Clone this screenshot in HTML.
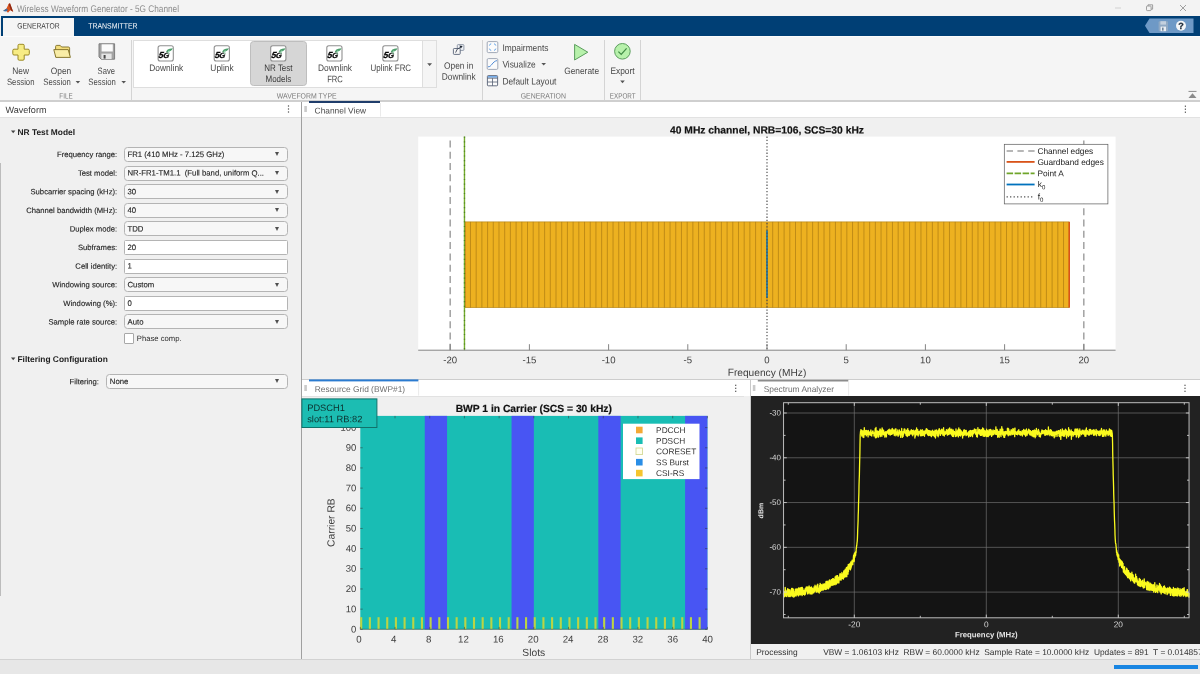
<!DOCTYPE html>
<html lang="en"><head><meta charset="utf-8"><title>Wireless Waveform Generator - 5G Channel</title>
<style>
*{box-sizing:border-box;margin:0;padding:0}
html,body{width:1200px;height:674px;overflow:hidden;background:#f0f0f0}
body{position:relative;will-change:transform;font-family:"Liberation Sans",sans-serif;color:#444;font-size:8.3px}
.a{position:absolute}
.t{position:absolute;white-space:nowrap;line-height:1;transform:translate(var(--fx,0px),var(--fy,0px)) rotate(0.03deg)}
.c{transform:translate(var(--fx,0px),var(--fy,0px)) translateX(-50%) rotate(0.03deg)}
.r{transform:translate(var(--fx,0px),var(--fy,0px)) translateX(-100%) rotate(0.03deg)}
svg{position:absolute;left:0;top:0;overflow:visible}
svg text{font-family:"Liberation Sans",sans-serif}
.fld{position:absolute;left:124px;width:163.6px;height:15.2px;border:1px solid #b4b4b4;background:#fff;border-radius:1.5px}
.dd{background:#f7f7f7;border-radius:3.5px;border-color:#b4b4b4}
.ft{-webkit-text-stroke:.12px #1e1e1e;font-size:7.76px;color:#1e1e1e}
.fld i{position:absolute;right:7.5px;top:4.5px;width:0;height:0;border-left:2.7px solid transparent;border-right:2.7px solid transparent;border-top:4.6px solid #505050}
.lbl{-webkit-text-stroke:.12px #1e1e1e;position:absolute;white-space:nowrap;line-height:1;font-size:7.7px;color:#1e1e1e;transform:translate(var(--fx,0px),var(--fy,0px)) translateX(-100%) rotate(0.03deg);left:117.2px}
.rt{position:absolute;white-space:nowrap;line-height:1.235;font-size:9.3px;color:#484848;text-align:center;transform:translate(var(--fx,0px),var(--fy,0px)) translateX(-50%) scaleX(.9) rotate(0.03deg)}
.lt{position:absolute;white-space:nowrap;line-height:1;font-size:9.3px;color:#484848;transform-origin:0 50%;transform:translate(var(--fx,0px),var(--fy,0px)) scaleX(.9) rotate(0.03deg)}
.sec{position:absolute;white-space:nowrap;line-height:1;font-size:7.7px;color:#7a7a7a;transform:translate(var(--fx,0px),var(--fy,0px)) translateX(-50%) scaleX(.9) rotate(0.03deg);top:92.6px}
.vsep{position:absolute;width:1.2px;background:#d4d4d4;top:40.4px;height:59.4px}
</style></head>
<body>
<div class="a" style="left:0;top:0;width:1200px;height:16px;background:#f3f3f3"></div>
<svg width="1200" height="16" viewBox="0 -0.8 1200 16"><path d="M3 10.2 L6.5 7.6 L8.6 3.2 L10 2.4 L13.2 11 L10.2 9.4 L8 12 L6 10 Z" fill="#d9531e"/><path d="M3 10.2 L6.5 7.6 L8 9.3 L6 10.6 Z" fill="#3a6ea5"/><path d="M8.6 3.2 L10 2.4 L13.2 11 L11 9.8 Z" fill="#8e2a16"/></svg>
<div class="t" style="top:3px;--fy:0.9px;left:17px;font-size:9.6px;color:#8c8c8c;transform-origin:0 50%;transform:translate(var(--fx,0px),var(--fy,0px)) scaleX(.86) rotate(0.03deg)">Wireless Waveform Generator - 5G Channel</div>
<svg width="1200" height="16" viewBox="0 0 1200 16"><path d="M1115 8 H1121" stroke="#c8c8c8" stroke-width="0.8" fill="none"/><rect x="1146.5" y="6" width="4.6" height="4.6" rx="0.8" fill="none" stroke="#8a8a8a" stroke-width="0.8"/><path d="M1148 6 V4.8 H1152.6 V9.2 H1151.2" fill="none" stroke="#8a8a8a" stroke-width="0.8"/><path d="M1180 5 L1186 11 M1186 5 L1180 11" stroke="#8a8a8a" stroke-width="0.8" fill="none"/></svg>
<div class="a" style="left:1px;top:16px;width:1199px;height:19.6px;background:#003f75"></div>
<div class="a" style="left:0;top:35.6px;width:1200px;height:65.4px;background:#f5f5f5"></div>
<div class="a" style="left:0;top:35.6px;width:1200px;height:0.9px;background:#fcfcfc"></div>
<div class="a" style="left:3.3px;top:18.3px;width:70.6px;height:18px;background:#f5f5f5"></div>
<div class="t" style="top:22px;--fy:0.5px;left:38px;--fx:0.4px;font-size:7.8px;color:#3c3c3c;transform:translate(var(--fx,0px),var(--fy,0px)) translateX(-50%) scaleX(.87) rotate(0.03deg)">GENERATOR</div>
<div class="t" style="top:22px;--fy:0.5px;left:112px;--fx:0.9px;font-size:7.8px;color:#fff;transform:translate(var(--fx,0px),var(--fy,0px)) translateX(-50%) scaleX(.89) rotate(0.03deg)">TRANSMITTER</div>
<svg width="1200" height="40" viewBox="0 0 1200 40"><path d="M1145 25.8 L1149.5 18.6 H1193.5 V33 H1149.5 Z" fill="#6e99c6"/><rect x="1158.6" y="21.2" width="9.4" height="10" rx="1" fill="#8fa9c4"/><rect x="1160.4" y="21.2" width="5.6" height="3.4" fill="#c3d0de"/><rect x="1160.6" y="26.6" width="5.4" height="4.6" fill="#e8edf2"/><rect x="1162" y="27.6" width="1.6" height="3" fill="#6f859c"/><circle cx="1181" cy="25.8" r="5" fill="#f4f6f8"/><text transform="rotate(0.03 1181 29)" x="1181" y="29" font-size="9" font-weight="bold" text-anchor="middle" fill="#1d2b3a" stroke="#1d2b3a" stroke-width="0.3">?</text></svg>
<div class="a" style="left:0;top:100.4px;width:1200px;height:1.2px;background:#cfcfcf"></div>
<svg width="1200" height="110" viewBox="0 0 1200 110"><path d="M1188.5 91.4 H1196.5" stroke="#8a8a8a" stroke-width="1"/><path d="M1188.5 98 L1192.5 93.2 L1196.5 98 Z" fill="#8a8a8a"/></svg>
<div class="vsep" style="left:131px"></div>
<div class="vsep" style="left:481.8px"></div>
<div class="vsep" style="left:604.1px"></div>
<div class="vsep" style="left:640.2px"></div>
<div class="a" style="left:133.2px;top:40.4px;width:303.8px;height:47.3px;background:#fff;border:1px solid #dedede"></div>
<div class="a" style="left:422.4px;top:40.4px;width:14.6px;height:47.3px;background:#f5f5f5;border:1px solid #dedede"></div>
<div class="a" style="left:250.4px;top:41.4px;width:56.4px;height:44.6px;background:#d6d6d6;border:1px solid #bebebe;border-radius:3.5px"></div>
<svg width="1200" height="101" viewBox="0 0 1200 101"><path d="M19.2 44.3 h3.8 q1.2 0 1.2 1.2 v3.7 h3.9 q1.2 0 1.2 1.2 v3.4 q0 1.2 -1.2 1.2 h-3.9 v4 q0 1.2 -1.2 1.2 h-3.8 q-1.2 0 -1.2 -1.2 v-4 h-4 q-1.2 0 -1.2 -1.2 v-3.4 q0 -1.2 1.2 -1.2 h4 v-3.7 q0 -1.2 1.2 -1.2 z" fill="#f7ec84" stroke="#9c8a24" stroke-width="1"/><path d="M55.6 56.6 V46.6 q0 -1.2 1 -1.2 h3.6 l1.4 1.6 h6.8 q1.2 0 1.2 1.2 V56.6 Z" fill="#f3dd7c" stroke="#7d6c22" stroke-width="0.9" stroke-linejoin="round"/><path d="M53.8 49.6 h14.4 l2.2 7.8 h-14.6 Z" fill="#f9eda6" stroke="#7d6c22" stroke-width="0.9" stroke-linejoin="round"/><path d="M99 43.8 h15.6 v15.4 h-13.4 l-2.2 -2.2 Z" fill="#a3a3a3" stroke="#7e7e7e" stroke-width="1" stroke-linejoin="round"/><rect x="101.6" y="44.3" width="11.2" height="7.2" fill="#fbfbfb"/><rect x="101.4" y="53.6" width="10.2" height="5.4" fill="#e6e6e6"/><rect x="103.6" y="55" width="2" height="3.6" fill="#4a4a4a"/><g transform="translate(157.7,45.4)"><rect x="0.4" y="0.4" width="15.2" height="15.2" rx="2" fill="#fff" stroke="#909090" stroke-width="1.1"/><text transform="skewX(-9)" x="2.7" y="12.8" font-size="8.8" font-weight="bold" font-style="italic" fill="#0a0a0a" stroke="#0a0a0a" stroke-width="0.3" letter-spacing="-0.3">5<tspan font-size="7.6">G</tspan></text><path d="M8.4 6 Q9.8 3.8 12 3.4 L15.2 2.8 Q14.2 5 12.8 5.5 Q10.6 5.9 9.2 7.2 Z" fill="#4d9f6b"/><path d="M11.6 5.2 Q11 7 10.4 8.6" stroke="#9fd9b4" stroke-width="1.2" fill="none"/></g><g transform="translate(213.8,45.4)"><rect x="0.4" y="0.4" width="15.2" height="15.2" rx="2" fill="#fff" stroke="#909090" stroke-width="1.1"/><text transform="skewX(-9)" x="2.7" y="12.8" font-size="8.8" font-weight="bold" font-style="italic" fill="#0a0a0a" stroke="#0a0a0a" stroke-width="0.3" letter-spacing="-0.3">5<tspan font-size="7.6">G</tspan></text><path d="M8.4 6 Q9.8 3.8 12 3.4 L15.2 2.8 Q14.2 5 12.8 5.5 Q10.6 5.9 9.2 7.2 Z" fill="#4d9f6b"/><path d="M11.6 5.2 Q11 7 10.4 8.6" stroke="#9fd9b4" stroke-width="1.2" fill="none"/></g><g transform="translate(270.3,45.4)"><rect x="0.4" y="0.4" width="15.2" height="15.2" rx="2" fill="#fff" stroke="#909090" stroke-width="1.1"/><text transform="skewX(-9)" x="2.7" y="12.8" font-size="8.8" font-weight="bold" font-style="italic" fill="#0a0a0a" stroke="#0a0a0a" stroke-width="0.3" letter-spacing="-0.3">5<tspan font-size="7.6">G</tspan></text><path d="M8.4 6 Q9.8 3.8 12 3.4 L15.2 2.8 Q14.2 5 12.8 5.5 Q10.6 5.9 9.2 7.2 Z" fill="#4d9f6b"/><path d="M11.6 5.2 Q11 7 10.4 8.6" stroke="#9fd9b4" stroke-width="1.2" fill="none"/></g><g transform="translate(326.4,45.4)"><rect x="0.4" y="0.4" width="15.2" height="15.2" rx="2" fill="#fff" stroke="#909090" stroke-width="1.1"/><text transform="skewX(-9)" x="2.7" y="12.8" font-size="8.8" font-weight="bold" font-style="italic" fill="#0a0a0a" stroke="#0a0a0a" stroke-width="0.3" letter-spacing="-0.3">5<tspan font-size="7.6">G</tspan></text><path d="M8.4 6 Q9.8 3.8 12 3.4 L15.2 2.8 Q14.2 5 12.8 5.5 Q10.6 5.9 9.2 7.2 Z" fill="#4d9f6b"/><path d="M11.6 5.2 Q11 7 10.4 8.6" stroke="#9fd9b4" stroke-width="1.2" fill="none"/></g><g transform="translate(382.4,45.4)"><rect x="0.4" y="0.4" width="15.2" height="15.2" rx="2" fill="#fff" stroke="#909090" stroke-width="1.1"/><text transform="skewX(-9)" x="2.7" y="12.8" font-size="8.8" font-weight="bold" font-style="italic" fill="#0a0a0a" stroke="#0a0a0a" stroke-width="0.3" letter-spacing="-0.3">5<tspan font-size="7.6">G</tspan></text><path d="M8.4 6 Q9.8 3.8 12 3.4 L15.2 2.8 Q14.2 5 12.8 5.5 Q10.6 5.9 9.2 7.2 Z" fill="#4d9f6b"/><path d="M11.6 5.2 Q11 7 10.4 8.6" stroke="#9fd9b4" stroke-width="1.2" fill="none"/></g><path d="M427.2 63.2 h4.8 l-2.4 2.8 Z" fill="#555"/><path d="M75.6 81 h4.6 l-2.3 2.6 Z" fill="#555"/><path d="M121.4 81 h4.6 l-2.3 2.6 Z" fill="#555"/><rect x="457.3" y="44.6" width="6.6" height="5.8" rx="0.8" fill="#eef1f6" stroke="#7c8798" stroke-width="0.8"/><rect x="453.4" y="48.5" width="6.8" height="5.9" rx="0.8" fill="#f5f5f5" stroke="#586378" stroke-width="0.9"/><path d="M455.6 52.6 Q456.2 48.6 460.6 47.2" fill="none" stroke="#3d4656" stroke-width="0.9"/><path d="M459.4 45.6 L462.6 46 L460.8 48.8 Z" fill="#1f2733"/><rect x="487.2" y="41.6" width="10.6" height="11" rx="1.2" fill="#fbfbfb" stroke="#8a94a6" stroke-width="0.8"/><path d="M489.4 45.6 q0.2 -1.6 1.8 -1.8 M494 43.8 q1.6 0.2 1.8 1.8 M495.8 48.6 q-0.2 1.6 -1.8 1.8 M491.2 50.4 q-1.6 -0.2 -1.8 -1.8" fill="none" stroke="#5b9ee6" stroke-width="0.9"/><rect x="487.2" y="58.6" width="10.6" height="10.8" rx="1.2" fill="#fbfbfb" stroke="#8a94a6" stroke-width="0.8"/><path d="M488 66.8 C491.6 67.2 492.2 61.4 497 60.6" fill="none" stroke="#3f7fd0" stroke-width="0.9"/><rect x="487.4" y="75.6" width="10.2" height="10.2" rx="0.8" fill="#fbfbfb" stroke="#566074" stroke-width="0.9"/><rect x="487.9" y="76.1" width="9.2" height="1.5" fill="#6aa7ea"/><path d="M487.4 78.2 h10.2 M487.4 82 h10.2 M492.5 78.2 v7.6" fill="none" stroke="#566074" stroke-width="0.8"/><path d="M541.4 63 h4.6 l-2.3 2.6 Z" fill="#555"/><path d="M574.6 44.4 L587.8 52.2 L574.6 60 Z" fill="#b7f1ab" stroke="#5a9d5c" stroke-width="1" stroke-linejoin="round"/><circle cx="622.4" cy="51.3" r="7.8" fill="#b7f1ab" stroke="#5a9d5c" stroke-width="1"/><path d="M618.4 51.6 L621.2 54.4 L626.6 48.4" fill="none" stroke="#3f8a44" stroke-width="1.2"/><path d="M620.2 80.6 h4.6 l-2.3 2.6 Z" fill="#555"/></svg>
<div class="rt" style="top:66px;left:20px;--fx:0.6px;">New</div>
<div class="rt" style="top:77px;--fy:0.05px;left:20px;--fx:0.7px;transform:translate(var(--fx,0px),var(--fy,0px)) translateX(-50%) scaleX(0.83) rotate(0.03deg);">Session</div>
<div class="rt" style="top:66px;left:61px;">Open</div>
<div class="rt" style="top:77px;--fy:0.05px;left:57px;transform:translate(var(--fx,0px),var(--fy,0px)) translateX(-50%) scaleX(0.83) rotate(0.03deg);">Session</div>
<div class="rt" style="top:66px;left:106px;--fx:0.3px;transform:translate(var(--fx,0px),var(--fy,0px)) translateX(-50%) scaleX(0.82) rotate(0.03deg);">Save</div>
<div class="rt" style="top:77px;--fy:0.05px;left:102px;--fx:0.1px;transform:translate(var(--fx,0px),var(--fy,0px)) translateX(-50%) scaleX(0.83) rotate(0.03deg);">Session</div>
<div class="rt" style="top:63px;left:166px;--fx:0.3px;">Downlink</div>
<div class="rt" style="top:63px;left:222px;">Uplink</div>
<div class="rt" style="top:63px;left:278px;--fx:0.4px;color:#3a3a3a;transform:translate(var(--fx,0px),var(--fy,0px)) translateX(-50%) scaleX(0.86) rotate(0.03deg);">NR Test<br>Models</div>
<div class="rt" style="top:63px;left:335px;">Downlink</div>
<div class="rt" style="top:74px;--fy:0.25px;left:335px;transform:translate(var(--fx,0px),var(--fy,0px)) translateX(-50%) scaleX(0.82) rotate(0.03deg);">FRC</div>
<div class="rt" style="top:63px;left:390px;--fx:0.8px;transform:translate(var(--fx,0px),var(--fy,0px)) translateX(-50%) scaleX(0.855) rotate(0.03deg);">Uplink FRC</div>
<div class="rt" style="top:60px;--fy:0.8px;left:458px;--fx:0.7px;">Open in<br>Downlink</div>
<div class="rt" style="top:65px;--fy:0.9px;left:581px;--fx:0.6px;">Generate</div>
<div class="rt" style="top:65px;--fy:0.9px;left:622px;--fx:0.5px;">Export</div>
<div class="lt" style="top:43px;--fy:0.9px;left:502px;--fx:0.4px;">Impairments</div>
<div class="lt" style="top:60px;--fy:0.4px;left:502px;--fx:0.4px;">Visualize</div>
<div class="lt" style="top:77px;--fy:0.4px;left:502px;--fx:0.4px;">Default Layout</div>
<div class="sec" style="top:92px;--fy:0.6px;left:66px; transform:translate(var(--fx,0px),var(--fy,0px)) translateX(-50%) scaleX(.82) rotate(0.03deg);">FILE</div>
<div class="sec" style="top:92px;--fy:0.6px;left:306px;--fx:0.7px;">WAVEFORM TYPE</div>
<div class="sec" style="top:92px;--fy:0.6px;left:543px;--fx:0.3px;">GENERATION</div>
<div class="sec" style="top:92px;--fy:0.6px;left:622px;--fx:0.7px; transform:translate(var(--fx,0px),var(--fy,0px)) translateX(-50%) scaleX(.82) rotate(0.03deg);">EXPORT</div>
<div class="a" style="left:0;top:101.6px;width:1200px;height:15.2px;background:#fff"></div>
<div class="a" style="left:0;top:116.6px;width:1200px;height:0.8px;background:#e2e2e2"></div>
<div class="t" style="top:105px;--fy:0.9px;left:5px;--fx:0.4px;font-size:9.1px;color:#3a3a3a">Waveform</div>
<div class="a" style="left:301px;top:101.6px;width:1px;height:557.6px;background:#a0a0a0"></div>

<div class="a" style="left:0;top:163px;width:1px;height:433px;background:#bcbcbc"></div>
<div class="t" style="top:127px;--fy:0.9px;left:17px;--fx:0.5px;font-size:8.4px;font-weight:bold;color:#1c1c1c">NR Test Model</div>
<div class="t" style="top:354px;--fy:0.9px;left:17px;--fx:0.5px;font-size:8.4px;font-weight:bold;color:#1c1c1c">Filtering Configuration</div>
<svg width="310" height="674" viewBox="0 0 310 674"><path d="M11 130.6 h4.4 l-2.2 2.6 Z" fill="#444"/><path d="M11 357.6 h4.4 l-2.2 2.6 Z" fill="#444"/><rect x="287.9" y="105.4" width="1.2" height="1.2" fill="#4a4a4a"/><rect x="287.9" y="108.4" width="1.2" height="1.2" fill="#4a4a4a"/><rect x="287.9" y="111.4" width="1.2" height="1.2" fill="#4a4a4a"/><path d="M7 663.4 v7.2" stroke="#8a8a8a" stroke-width="1.2"/><path d="M12.8 663.4 v7.2 l-4.6 -3.6 Z" fill="#8a8a8a"/></svg>
<div class="lbl" style="top:151px;--fy:0.1px;left:117px;--fx:0.2px;">Frequency range:</div>
<div class="fld dd" style="top:146.90px"><i></i></div>
<div class="t ft" style="top:151px;left:127px;--fx:0.5px;">FR1 (410 MHz - 7.125 GHz)</div>
<div class="lbl" style="top:169px;--fy:0.7px;left:117px;--fx:0.2px;">Test model:</div>
<div class="fld dd" style="top:165.50px"><i></i></div>
<div class="t ft" style="top:169px;--fy:0.6px;left:127px;--fx:0.5px;">NR-FR1-TM1.1&nbsp; (Full band, uniform Q...</div>
<div class="lbl" style="top:188px;--fy:0.3px;left:117px;--fx:0.2px;">Subcarrier spacing (kHz):</div>
<div class="fld dd" style="top:184.10px"><i></i></div>
<div class="t ft" style="top:188px;--fy:0.2px;left:127px;--fx:0.5px;">30</div>
<div class="lbl" style="top:206px;--fy:0.9px;left:117px;--fx:0.2px;">Channel bandwidth (MHz):</div>
<div class="fld dd" style="top:202.70px"><i></i></div>
<div class="t ft" style="top:206px;--fy:0.8px;left:127px;--fx:0.5px;">40</div>
<div class="lbl" style="top:225px;--fy:0.5px;left:117px;--fx:0.2px;">Duplex mode:</div>
<div class="fld dd" style="top:221.30px"><i></i></div>
<div class="t ft" style="top:225px;--fy:0.4px;left:127px;--fx:0.5px;">TDD</div>
<div class="lbl" style="top:244px;--fy:0.1px;left:117px;--fx:0.2px;">Subframes:</div>
<div class="fld" style="top:239.90px"></div>
<div class="t ft" style="top:244px;left:127px;--fx:0.5px;">20</div>
<div class="lbl" style="top:262px;--fy:0.7px;left:117px;--fx:0.2px;">Cell identity:</div>
<div class="fld" style="top:258.50px"></div>
<div class="t ft" style="top:262px;--fy:0.6px;left:127px;--fx:0.5px;">1</div>
<div class="lbl" style="top:281px;--fy:0.3px;left:117px;--fx:0.2px;">Windowing source:</div>
<div class="fld dd" style="top:277.10px"><i></i></div>
<div class="t ft" style="top:281px;--fy:0.2px;left:127px;--fx:0.5px;">Custom</div>
<div class="lbl" style="top:299px;--fy:0.9px;left:117px;--fx:0.2px;">Windowing (%):</div>
<div class="fld" style="top:295.70px"></div>
<div class="t ft" style="top:299px;--fy:0.8px;left:127px;--fx:0.5px;">0</div>
<div class="lbl" style="top:318px;--fy:0.5px;left:117px;--fx:0.2px;">Sample rate source:</div>
<div class="fld dd" style="top:314.30px"><i></i></div>
<div class="t ft" style="top:318px;--fy:0.4px;left:127px;--fx:0.5px;">Auto</div>
<div class="a" style="left:124.1px;top:333.4px;width:10.2px;height:10.3px;background:#fff;border:1px solid #a8a8a8;border-radius:1px"></div>
<div class="t" style="top:335px;left:136px;--fx:0.8px;font-size:7.7px;color:#2a2a2a">Phase comp.</div>
<div class="lbl" style="top:378px;--fy:0.2px;left:99px;">Filtering:</div>
<div class="fld dd" style="left:106.3px;width:181.3px;top:373.8px"><i></i></div>
<div class="t ft" style="top:377px;--fy:0.9px;left:109px;--fx:0.8px;">None</div>
<div class="a" style="left:0;top:659px;width:1200px;height:15px;background:#e7e7e7"></div>
<div class="a" style="left:0;top:658.6px;width:1200px;height:1px;background:#d2d2d2"></div>
<svg width="1200" height="400" viewBox="0 0 1200 400"><rect x="309" y="101" width="71" height="16" fill="#fff"/><rect x="309" y="101" width="71" height="2" fill="#1f3d6b"/><path d="M380.5 103 V116.6" stroke="#e4e4e4" stroke-width="0.8"/><rect x="304.3" y="106" width="2.6" height="6" fill="#cacaca"/><text transform="rotate(0.03 314.6 113.5)" x="314.6" y="113.5" font-size="8.4" fill="#4a4a4a">Channel View</text><rect x="1184.8" y="105.6" width="1.2" height="1.2" fill="#4a4a4a"/><rect x="1184.8" y="108.6" width="1.2" height="1.2" fill="#4a4a4a"/><rect x="1184.8" y="111.6" width="1.2" height="1.2" fill="#4a4a4a"/><rect x="418.2" y="136.6" width="697.3999999999999" height="213.6" fill="#fff"/><rect x="464.77" y="221.9" width="604.45" height="85.70" fill="#edb120" stroke="#b8891c" stroke-width="0.7"/><path d="M470.48 221.9V307.6M476.18 221.9V307.6M481.88 221.9V307.6M487.58 221.9V307.6M493.28 221.9V307.6M498.99 221.9V307.6M504.69 221.9V307.6M510.39 221.9V307.6M516.09 221.9V307.6M521.80 221.9V307.6M527.50 221.9V307.6M533.20 221.9V307.6M538.90 221.9V307.6M544.61 221.9V307.6M550.31 221.9V307.6M556.01 221.9V307.6M561.71 221.9V307.6M567.42 221.9V307.6M573.12 221.9V307.6M578.82 221.9V307.6M584.52 221.9V307.6M590.23 221.9V307.6M595.93 221.9V307.6M601.63 221.9V307.6M607.33 221.9V307.6M613.04 221.9V307.6M618.74 221.9V307.6M624.44 221.9V307.6M630.14 221.9V307.6M635.84 221.9V307.6M641.55 221.9V307.6M647.25 221.9V307.6M652.95 221.9V307.6M658.65 221.9V307.6M664.36 221.9V307.6M670.06 221.9V307.6M675.76 221.9V307.6M681.46 221.9V307.6M687.17 221.9V307.6M692.87 221.9V307.6M698.57 221.9V307.6M704.27 221.9V307.6M709.98 221.9V307.6M715.68 221.9V307.6M721.38 221.9V307.6M727.08 221.9V307.6M732.79 221.9V307.6M738.49 221.9V307.6M744.19 221.9V307.6M749.89 221.9V307.6M755.60 221.9V307.6M761.30 221.9V307.6M767.00 221.9V307.6M772.70 221.9V307.6M778.40 221.9V307.6M784.11 221.9V307.6M789.81 221.9V307.6M795.51 221.9V307.6M801.21 221.9V307.6M806.92 221.9V307.6M812.62 221.9V307.6M818.32 221.9V307.6M824.02 221.9V307.6M829.73 221.9V307.6M835.43 221.9V307.6M841.13 221.9V307.6M846.83 221.9V307.6M852.54 221.9V307.6M858.24 221.9V307.6M863.94 221.9V307.6M869.64 221.9V307.6M875.35 221.9V307.6M881.05 221.9V307.6M886.75 221.9V307.6M892.45 221.9V307.6M898.16 221.9V307.6M903.86 221.9V307.6M909.56 221.9V307.6M915.26 221.9V307.6M920.96 221.9V307.6M926.67 221.9V307.6M932.37 221.9V307.6M938.07 221.9V307.6M943.77 221.9V307.6M949.48 221.9V307.6M955.18 221.9V307.6M960.88 221.9V307.6M966.58 221.9V307.6M972.29 221.9V307.6M977.99 221.9V307.6M983.69 221.9V307.6M989.39 221.9V307.6M995.10 221.9V307.6M1000.80 221.9V307.6M1006.50 221.9V307.6M1012.20 221.9V307.6M1017.91 221.9V307.6M1023.61 221.9V307.6M1029.31 221.9V307.6M1035.01 221.9V307.6M1040.72 221.9V307.6M1046.42 221.9V307.6M1052.12 221.9V307.6M1057.82 221.9V307.6M1063.52 221.9V307.6" stroke="#ab7a12" stroke-width="0.8" stroke-opacity="0.85" fill="none"/><path d="M1069.23 221.9V307.6" stroke="#d95319" stroke-width="1.6"/><path d="M464.77 221.9V307.6" stroke="#d95319" stroke-width="1.2"/><path d="M450.20 137.6V350.2" stroke="#a2a2a2" stroke-width="1.5" stroke-dasharray="7 4.3" stroke-dashoffset="8.5"/><path d="M1083.80 137.6V350.2" stroke="#a2a2a2" stroke-width="1.5" stroke-dasharray="7 4.3" stroke-dashoffset="8.5"/><path d="M464.47 136.6V350.2" stroke="#74ad2c" stroke-width="1.4"/><path d="M464.47 136.6V350.2" stroke="#3f6f1c" stroke-width="1.4" stroke-dasharray="1.1 3.6" stroke-opacity="0.7"/><path d="M767.00 230.5V298" stroke="#0072bd" stroke-width="1.5"/><path d="M767.00 136.6V350.2" stroke="#505050" stroke-width="1.2" stroke-dasharray="1.3 1.9"/><path d="M418.2 350.2H1115.6" stroke="#858585" stroke-width="1"/><path d="M450.20 350.2v-6M529.40 350.2v-6M608.60 350.2v-6M687.80 350.2v-6M767.00 350.2v-6M846.20 350.2v-6M925.40 350.2v-6M1004.60 350.2v-6M1083.80 350.2v-6" stroke="#858585" stroke-width="1"/><text transform="rotate(0.03 450.20 363.2)" x="450.20" y="363.2" font-size="9.6" text-anchor="middle" fill="#404040">-20</text><text transform="rotate(0.03 529.40 363.2)" x="529.40" y="363.2" font-size="9.6" text-anchor="middle" fill="#404040">-15</text><text transform="rotate(0.03 608.60 363.2)" x="608.60" y="363.2" font-size="9.6" text-anchor="middle" fill="#404040">-10</text><text transform="rotate(0.03 687.80 363.2)" x="687.80" y="363.2" font-size="9.6" text-anchor="middle" fill="#404040">-5</text><text transform="rotate(0.03 767.00 363.2)" x="767.00" y="363.2" font-size="9.6" text-anchor="middle" fill="#404040">0</text><text transform="rotate(0.03 846.20 363.2)" x="846.20" y="363.2" font-size="9.6" text-anchor="middle" fill="#404040">5</text><text transform="rotate(0.03 925.40 363.2)" x="925.40" y="363.2" font-size="9.6" text-anchor="middle" fill="#404040">10</text><text transform="rotate(0.03 1004.60 363.2)" x="1004.60" y="363.2" font-size="9.6" text-anchor="middle" fill="#404040">15</text><text transform="rotate(0.03 1083.80 363.2)" x="1083.80" y="363.2" font-size="9.6" text-anchor="middle" fill="#404040">20</text><text transform="rotate(0.03 767.00 375.9)" x="767.00" y="375.9" font-size="10.2" text-anchor="middle" fill="#404040">Frequency (MHz)</text><text transform="rotate(0.03 767.00 133.5)" x="767.00" y="133.5" font-size="10.3" font-weight="bold" text-anchor="middle" fill="#111" stroke="#111" stroke-width="0.2">40 MHz channel, NRB=106, SCS=30 kHz</text><rect x="1004.3" y="144.3" width="103.6" height="59.6" fill="#fff" stroke="#5a5a5a" stroke-width="0.7"/><path d="M1006.6 151H1034.6" stroke="#a0a0a0" stroke-width="1.7" stroke-dasharray="6.4 4.4"/><path d="M1006.6 161.9H1034.6" stroke="#d95319" stroke-width="1.8"/><path d="M1006.6 173.3H1034.6" stroke="#6fa52a" stroke-width="1.8" stroke-dasharray="6.5 1.5"/><path d="M1006.6 184.5H1034.6" stroke="#0072bd" stroke-width="1.8"/><path d="M1006.6 196.9H1034.6" stroke="#444" stroke-width="1.2" stroke-dasharray="1.2 2.3"/><text transform="rotate(0.03 1037.4 154)" x="1037.4" y="154" font-size="8.3" fill="#222">Channel edges</text><text transform="rotate(0.03 1037.4 164.9)" x="1037.4" y="164.9" font-size="8.3" fill="#222">Guardband edges</text><text transform="rotate(0.03 1037.4 176.3)" x="1037.4" y="176.3" font-size="8.3" fill="#222">Point A</text><text transform="rotate(0.03 1037.8 187.1)" x="1037.8" y="187.1" font-size="8.3" fill="#222">k<tspan font-size="6" dy="2.2">0</tspan></text><text transform="rotate(0.03 1037.8 199.5)" x="1037.8" y="199.5" font-size="8.3" fill="#222">f<tspan font-size="6" dy="2.2">0</tspan></text></svg>
<div class="a" style="left:302px;top:379.2px;width:898px;height:1px;background:#cdcdcd"></div>
<div class="a" style="left:302px;top:380.2px;width:898px;height:15.6px;background:#fff"></div>
<div class="a" style="left:302px;top:395.6px;width:449px;height:0.8px;background:#e2e2e2"></div>
<div class="a" style="left:744px;top:395.6px;width:7px;height:263px;background:#f0f0f0"></div>
<div class="a" style="left:750.4px;top:380.2px;width:0.9px;height:279px;background:#c9c9c9"></div>
<svg width="1200" height="674" viewBox="0 0 1200 674"><rect x="309" y="379.4" width="109.4" height="2" fill="#2b7bd0"/><path d="M418.6 381.4 V395.6" stroke="#e4e4e4" stroke-width="0.8"/><rect x="304.3" y="385" width="2.6" height="6" fill="#cacaca"/><text transform="rotate(0.03 314.8 392)" x="314.8" y="392" font-size="8.4" fill="#6e6e6e">Resource Grid (BWP#1)</text><rect x="735.1" y="384.7" width="1.2" height="1.2" fill="#4a4a4a"/><rect x="735.1" y="387.7" width="1.2" height="1.2" fill="#4a4a4a"/><rect x="735.1" y="390.7" width="1.2" height="1.2" fill="#4a4a4a"/><rect x="360.3" y="415.9" width="347.10" height="213.40" fill="#19bdb4"/><rect x="424.77" y="415.9" width="22.30" height="213.40" fill="#4855f3"/><rect x="511.55" y="415.9" width="22.30" height="213.40" fill="#4855f3"/><rect x="598.32" y="415.9" width="22.30" height="213.40" fill="#4855f3"/><rect x="685.10" y="415.9" width="22.30" height="213.40" fill="#4855f3"/><rect x="360.15" y="617.20" width="2.1" height="12.10" fill="#bbd444"/><rect x="368.83" y="617.20" width="2.1" height="12.10" fill="#bbd444"/><rect x="377.51" y="617.20" width="2.1" height="12.10" fill="#bbd444"/><rect x="386.18" y="617.20" width="2.1" height="12.10" fill="#bbd444"/><rect x="394.86" y="617.20" width="2.1" height="12.10" fill="#bbd444"/><rect x="403.54" y="617.20" width="2.1" height="12.10" fill="#bbd444"/><rect x="412.22" y="617.20" width="2.1" height="12.10" fill="#bbd444"/><rect x="420.89" y="617.20" width="2.1" height="12.10" fill="#bbd444"/><rect x="429.57" y="617.20" width="2.1" height="12.10" fill="#bbd444"/><rect x="438.25" y="617.20" width="2.1" height="12.10" fill="#bbd444"/><rect x="446.93" y="617.20" width="2.1" height="12.10" fill="#bbd444"/><rect x="455.60" y="617.20" width="2.1" height="12.10" fill="#bbd444"/><rect x="464.28" y="617.20" width="2.1" height="12.10" fill="#bbd444"/><rect x="472.96" y="617.20" width="2.1" height="12.10" fill="#bbd444"/><rect x="481.63" y="617.20" width="2.1" height="12.10" fill="#bbd444"/><rect x="490.31" y="617.20" width="2.1" height="12.10" fill="#bbd444"/><rect x="498.99" y="617.20" width="2.1" height="12.10" fill="#bbd444"/><rect x="507.67" y="617.20" width="2.1" height="12.10" fill="#bbd444"/><rect x="516.35" y="617.20" width="2.1" height="12.10" fill="#bbd444"/><rect x="525.02" y="617.20" width="2.1" height="12.10" fill="#bbd444"/><rect x="533.70" y="617.20" width="2.1" height="12.10" fill="#bbd444"/><rect x="542.38" y="617.20" width="2.1" height="12.10" fill="#bbd444"/><rect x="551.05" y="617.20" width="2.1" height="12.10" fill="#bbd444"/><rect x="559.73" y="617.20" width="2.1" height="12.10" fill="#bbd444"/><rect x="568.41" y="617.20" width="2.1" height="12.10" fill="#bbd444"/><rect x="577.09" y="617.20" width="2.1" height="12.10" fill="#bbd444"/><rect x="585.76" y="617.20" width="2.1" height="12.10" fill="#bbd444"/><rect x="594.44" y="617.20" width="2.1" height="12.10" fill="#bbd444"/><rect x="603.12" y="617.20" width="2.1" height="12.10" fill="#bbd444"/><rect x="611.80" y="617.20" width="2.1" height="12.10" fill="#bbd444"/><rect x="620.48" y="617.20" width="2.1" height="12.10" fill="#bbd444"/><rect x="629.15" y="617.20" width="2.1" height="12.10" fill="#bbd444"/><rect x="637.83" y="617.20" width="2.1" height="12.10" fill="#bbd444"/><rect x="646.51" y="617.20" width="2.1" height="12.10" fill="#bbd444"/><rect x="655.19" y="617.20" width="2.1" height="12.10" fill="#bbd444"/><rect x="663.86" y="617.20" width="2.1" height="12.10" fill="#bbd444"/><rect x="672.54" y="617.20" width="2.1" height="12.10" fill="#bbd444"/><rect x="681.22" y="617.20" width="2.1" height="12.10" fill="#bbd444"/><rect x="689.89" y="617.20" width="2.1" height="12.10" fill="#bbd444"/><rect x="698.57" y="617.20" width="2.1" height="12.10" fill="#bbd444"/><path d="M360.30 629.3v-2.4M360.30 415.9v2.4M395.01 629.3v-2.4M395.01 415.9v2.4M429.72 629.3v-2.4M429.72 415.9v2.4M464.43 629.3v-2.4M464.43 415.9v2.4M499.14 629.3v-2.4M499.14 415.9v2.4M533.85 629.3v-2.4M533.85 415.9v2.4M568.56 629.3v-2.4M568.56 415.9v2.4M603.27 629.3v-2.4M603.27 415.9v2.4M637.98 629.3v-2.4M637.98 415.9v2.4M672.69 629.3v-2.4M672.69 415.9v2.4M707.40 629.3v-2.4M707.40 415.9v2.4M360.3 629.30h2.4M707.4 629.30h-2.4M360.3 609.13h2.4M707.4 609.13h-2.4M360.3 588.96h2.4M707.4 588.96h-2.4M360.3 568.79h2.4M707.4 568.79h-2.4M360.3 548.62h2.4M707.4 548.62h-2.4M360.3 528.45h2.4M707.4 528.45h-2.4M360.3 508.28h2.4M707.4 508.28h-2.4M360.3 488.11h2.4M707.4 488.11h-2.4M360.3 467.94h2.4M707.4 467.94h-2.4M360.3 447.77h2.4M707.4 447.77h-2.4M360.3 427.60h2.4M707.4 427.60h-2.4" stroke="#333" stroke-width="0.7" stroke-opacity="0.75" fill="none"/><path d="M360.3 629.3H707.4" stroke="#2a4a3a" stroke-width="0.8" stroke-opacity="0.75" fill="none"/><text transform="rotate(0.03 358.90 642.6)" x="358.90" y="642.6" font-size="9.7" text-anchor="middle" fill="#404040">0</text><text transform="rotate(0.03 393.76 642.6)" x="393.76" y="642.6" font-size="9.7" text-anchor="middle" fill="#404040">4</text><text transform="rotate(0.03 428.63 642.6)" x="428.63" y="642.6" font-size="9.7" text-anchor="middle" fill="#404040">8</text><text transform="rotate(0.03 463.49 642.6)" x="463.49" y="642.6" font-size="9.7" text-anchor="middle" fill="#404040">12</text><text transform="rotate(0.03 498.36 642.6)" x="498.36" y="642.6" font-size="9.7" text-anchor="middle" fill="#404040">16</text><text transform="rotate(0.03 533.22 642.6)" x="533.22" y="642.6" font-size="9.7" text-anchor="middle" fill="#404040">20</text><text transform="rotate(0.03 568.08 642.6)" x="568.08" y="642.6" font-size="9.7" text-anchor="middle" fill="#404040">24</text><text transform="rotate(0.03 602.95 642.6)" x="602.95" y="642.6" font-size="9.7" text-anchor="middle" fill="#404040">28</text><text transform="rotate(0.03 637.81 642.6)" x="637.81" y="642.6" font-size="9.7" text-anchor="middle" fill="#404040">32</text><text transform="rotate(0.03 672.68 642.6)" x="672.68" y="642.6" font-size="9.7" text-anchor="middle" fill="#404040">36</text><text transform="rotate(0.03 707.54 642.6)" x="707.54" y="642.6" font-size="9.7" text-anchor="middle" fill="#404040">40</text><text transform="rotate(0.03 356.4 632.40)" x="356.4" y="632.40" font-size="9.5" text-anchor="end" fill="#404040">0</text><text transform="rotate(0.03 356.4 612.23)" x="356.4" y="612.23" font-size="9.5" text-anchor="end" fill="#404040">10</text><text transform="rotate(0.03 356.4 592.06)" x="356.4" y="592.06" font-size="9.5" text-anchor="end" fill="#404040">20</text><text transform="rotate(0.03 356.4 571.89)" x="356.4" y="571.89" font-size="9.5" text-anchor="end" fill="#404040">30</text><text transform="rotate(0.03 356.4 551.72)" x="356.4" y="551.72" font-size="9.5" text-anchor="end" fill="#404040">40</text><text transform="rotate(0.03 356.4 531.55)" x="356.4" y="531.55" font-size="9.5" text-anchor="end" fill="#404040">50</text><text transform="rotate(0.03 356.4 511.38)" x="356.4" y="511.38" font-size="9.5" text-anchor="end" fill="#404040">60</text><text transform="rotate(0.03 356.4 491.21)" x="356.4" y="491.21" font-size="9.5" text-anchor="end" fill="#404040">70</text><text transform="rotate(0.03 356.4 471.04)" x="356.4" y="471.04" font-size="9.5" text-anchor="end" fill="#404040">80</text><text transform="rotate(0.03 356.4 450.87)" x="356.4" y="450.87" font-size="9.5" text-anchor="end" fill="#404040">90</text><text transform="rotate(0.03 356.4 430.70)" x="356.4" y="430.70" font-size="9.5" text-anchor="end" fill="#404040">100</text><text transform="rotate(0.03 533.8 655.9)" x="533.8" y="655.9" font-size="10.3" text-anchor="middle" fill="#404040">Slots</text><text transform="translate(334.6,522.6) rotate(-90.03)" font-size="10.3" text-anchor="middle" fill="#404040">Carrier RB</text><text transform="rotate(0.03 533.8 412)" x="533.8" y="412" font-size="10.3" font-weight="bold" text-anchor="middle" fill="#111" stroke="#111" stroke-width="0.2">BWP 1 in Carrier (SCS = 30 kHz)</text><rect x="623" y="423.7" width="76.5" height="55.4" fill="#fff"/><rect x="636" y="426.7" width="6.6" height="6.6" fill="#f4a935"/><text transform="rotate(0.03 656.1 433.0)" x="656.1" y="433.0" font-size="8.3" fill="#333">PDCCH</text><rect x="636" y="437.4" width="6.6" height="6.6" fill="#19bdb4"/><text transform="rotate(0.03 656.1 443.7)" x="656.1" y="443.7" font-size="8.3" fill="#333">PDSCH</text><rect x="636" y="448.0" width="6.6" height="6.6" fill="#fffff0" stroke="#cfd58a" stroke-width="0.8"/><text transform="rotate(0.03 656.1 454.3)" x="656.1" y="454.3" font-size="8.3" fill="#333">CORESET</text><rect x="636" y="458.9" width="6.6" height="6.6" fill="#2a8ee6"/><text transform="rotate(0.03 656.1 465.2)" x="656.1" y="465.2" font-size="8.3" fill="#333">SS Burst</text><rect x="636" y="469.8" width="6.6" height="6.6" fill="#f5c52f"/><text transform="rotate(0.03 656.1 476.1)" x="656.1" y="476.1" font-size="8.3" fill="#333">CSI-RS</text><rect x="301.9" y="398.9" width="75" height="28.6" fill="#1cbdb2" stroke="#11726b" stroke-width="1"/><text transform="rotate(0.03 307.2 411)" x="307.2" y="411" font-size="9.3" fill="#0c302e">PDSCH1</text><text transform="rotate(0.03 307.2 422.3)" x="307.2" y="422.3" font-size="9.3" fill="#0c302e">slot:11 RB:82</text></svg>
<div class="a" style="left:751.2px;top:396px;width:448.8px;height:247.5px;background:#222"></div>
<svg width="1200" height="674" viewBox="0 0 1200 674"><rect x="757.8" y="379.8" width="90.5" height="1.7" fill="#8c8c8c"/><path d="M848.6 381.4 V395.6" stroke="#e4e4e4" stroke-width="0.8"/><rect x="752.8" y="385" width="2.6" height="6" fill="#cacaca"/><text transform="rotate(0.03 763.7 392)" x="763.7" y="392" font-size="8.4" fill="#6e6e6e">Spectrum Analyzer</text><rect x="1184.4" y="384.7" width="1.2" height="1.2" fill="#4a4a4a"/><rect x="1184.4" y="387.7" width="1.2" height="1.2" fill="#4a4a4a"/><rect x="1184.4" y="390.7" width="1.2" height="1.2" fill="#4a4a4a"/><rect x="783.55" y="402.7" width="405.50" height="215.10" fill="#141414"/><path d="M783.55 413.00H1189.05M783.55 457.77H1189.05M783.55 502.55H1189.05M783.55 547.33H1189.05M783.55 592.10H1189.05M854.30 402.7V617.8M986.30 402.7V617.8M1118.30 402.7V617.8" stroke="#707070" stroke-width="0.7" fill="none"/><polyline points="783.5,594.5 783.7,591.2 783.9,592.7 784.0,596.7 784.2,596.9 784.4,596.6 784.5,593.6 784.7,596.1 784.9,591.8 785.0,592.2 785.2,587.4 785.4,589.8 785.5,595.9 785.7,594.5 785.9,595.5 786.0,591.6 786.2,592.2 786.4,596.5 786.5,591.2 786.7,594.3 786.8,593.1 787.0,590.2 787.2,594.9 787.3,592.5 787.5,590.7 787.7,588.6 787.8,593.4 788.0,595.6 788.2,596.6 788.3,590.4 788.5,589.4 788.7,590.9 788.8,591.9 789.0,589.7 789.2,592.8 789.3,596.3 789.5,591.3 789.6,589.8 789.8,593.5 790.0,596.6 790.1,595.3 790.3,596.2 790.5,595.6 790.6,593.4 790.8,596.0 791.0,592.0 791.1,589.7 791.3,594.3 791.5,593.6 791.6,588.5 791.8,595.1 792.0,594.6 792.1,591.6 792.3,596.5 792.4,593.4 792.6,588.4 792.8,592.1 792.9,590.2 793.1,588.9 793.3,589.1 793.4,593.1 793.6,595.6 793.8,597.2 793.9,594.7 794.1,594.0 794.3,596.4 794.4,595.5 794.6,596.2 794.8,591.2 794.9,594.2 795.1,593.3 795.3,589.1 795.4,592.4 795.6,595.6 795.7,593.4 795.9,589.2 796.1,596.1 796.2,591.8 796.4,591.5 796.6,591.7 796.7,588.9 796.9,594.0 797.1,594.8 797.2,591.7 797.4,593.4 797.6,589.3 797.7,588.9 797.9,589.2 798.1,594.2 798.2,593.5 798.4,595.9 798.5,593.9 798.7,587.9 798.9,588.1 799.0,587.9 799.2,594.2 799.4,594.3 799.5,590.7 799.7,588.8 799.9,590.4 800.0,595.2 800.2,588.2 800.4,589.6 800.5,594.4 800.7,593.1 800.9,587.6 801.0,592.5 801.2,589.7 801.4,594.7 801.5,588.1 801.7,594.5 801.8,587.4 802.0,592.7 802.2,595.6 802.3,587.4 802.5,591.1 802.7,591.9 802.8,588.5 803.0,593.4 803.2,593.4 803.3,593.2 803.5,594.3 803.7,592.4 803.8,590.4 804.0,591.7 804.2,591.0 804.3,590.7 804.5,591.5 804.6,595.1 804.8,593.7 805.0,588.9 805.1,592.3 805.3,590.3 805.5,594.1 805.6,592.9 805.8,588.4 806.0,590.1 806.1,587.1 806.3,589.7 806.5,590.5 806.6,591.0 806.8,590.7 807.0,588.8 807.1,586.7 807.3,589.9 807.4,587.5 807.6,593.6 807.8,594.0 807.9,593.9 808.1,587.8 808.3,593.2 808.4,588.8 808.6,586.9 808.8,592.5 808.9,591.0 809.1,585.9 809.3,592.9 809.4,589.9 809.6,592.6 809.8,587.4 809.9,589.5 810.1,594.0 810.3,588.8 810.4,593.5 810.6,587.3 810.7,593.1 810.9,593.6 811.1,591.7 811.2,590.3 811.4,586.9 811.6,592.6 811.7,589.0 811.9,594.2 812.1,587.9 812.2,593.1 812.4,588.3 812.6,592.9 812.7,593.0 812.9,589.7 813.1,588.8 813.2,591.2 813.4,588.9 813.5,592.4 813.7,592.9 813.9,590.6 814.0,586.8 814.2,589.0 814.4,590.7 814.5,591.7 814.7,586.9 814.9,591.4 815.0,585.1 815.2,586.0 815.4,588.7 815.5,589.5 815.7,587.0 815.9,589.9 816.0,586.8 816.2,589.3 816.4,592.2 816.5,592.0 816.7,590.4 816.8,591.9 817.0,585.1 817.2,590.1 817.3,590.0 817.5,591.1 817.7,590.1 817.8,584.1 818.0,590.2 818.2,589.6 818.3,592.2 818.5,588.1 818.7,590.4 818.8,592.1 819.0,591.3 819.2,593.0 819.3,589.4 819.5,587.0 819.6,585.5 819.8,585.8 820.0,588.5 820.1,583.4 820.3,585.6 820.5,591.3 820.6,584.1 820.8,585.4 821.0,590.4 821.1,587.2 821.3,584.6 821.5,586.5 821.6,585.6 821.8,590.2 822.0,590.1 822.1,590.3 822.3,586.4 822.5,585.8 822.6,586.9 822.8,584.2 822.9,586.6 823.1,584.7 823.3,584.5 823.4,590.1 823.6,584.4 823.8,584.3 823.9,586.3 824.1,586.4 824.3,583.8 824.4,584.4 824.6,589.0 824.8,583.9 824.9,585.1 825.1,589.5 825.3,584.3 825.4,584.2 825.6,585.5 825.7,585.8 825.9,582.1 826.1,581.3 826.2,589.4 826.4,582.6 826.6,585.6 826.7,587.6 826.9,587.5 827.1,588.1 827.2,581.1 827.4,582.2 827.6,581.5 827.7,587.0 827.9,584.9 828.1,588.9 828.2,585.0 828.4,587.6 828.5,586.0 828.7,588.6 828.9,581.4 829.0,580.6 829.2,580.8 829.4,585.2 829.5,579.8 829.7,585.2 829.9,586.5 830.0,587.2 830.2,585.6 830.4,585.9 830.5,583.6 830.7,584.7 830.9,580.3 831.0,582.4 831.2,579.7 831.4,580.8 831.5,581.3 831.7,581.1 831.8,585.6 832.0,579.4 832.2,583.2 832.3,584.5 832.5,578.7 832.7,581.3 832.8,582.0 833.0,585.2 833.2,584.8 833.3,582.2 833.5,578.6 833.7,582.4 833.8,584.5 834.0,583.1 834.2,583.8 834.3,580.9 834.5,579.3 834.6,582.0 834.8,582.2 835.0,584.8 835.1,577.0 835.3,580.8 835.5,577.7 835.6,582.6 835.8,581.4 836.0,576.5 836.1,576.0 836.3,584.2 836.5,576.7 836.6,579.0 836.8,580.8 837.0,577.0 837.1,575.6 837.3,582.9 837.5,579.2 837.6,575.6 837.8,578.0 837.9,579.5 838.1,582.9 838.3,581.2 838.4,577.5 838.6,581.8 838.8,577.4 838.9,582.9 839.1,578.1 839.3,579.2 839.4,576.9 839.6,579.7 839.8,574.0 839.9,574.5 840.1,579.9 840.3,573.6 840.4,579.7 840.6,577.4 840.7,577.9 840.9,575.7 841.1,580.1 841.2,578.3 841.4,575.2 841.6,574.2 841.7,576.5 841.9,572.5 842.1,573.6 842.2,578.6 842.4,577.8 842.6,576.0 842.7,578.1 842.9,574.2 843.1,578.4 843.2,577.7 843.4,579.2 843.5,578.6 843.7,571.3 843.9,572.6 844.0,570.7 844.2,576.9 844.4,571.2 844.5,572.5 844.7,574.8 844.9,577.3 845.0,575.2 845.2,569.3 845.4,569.1 845.5,574.1 845.7,570.0 845.9,576.4 846.0,573.4 846.2,574.8 846.4,567.5 846.5,572.6 846.7,568.6 846.8,576.8 847.0,567.8 847.2,569.1 847.3,572.4 847.5,566.9 847.7,572.6 847.8,571.8 848.0,574.2 848.2,566.2 848.3,564.3 848.5,571.4 848.7,565.0 848.8,569.6 849.0,568.9 849.2,564.4 849.3,565.2 849.5,564.7 849.6,566.3 849.8,568.4 850.0,563.4 850.1,568.9 850.3,569.0 850.5,569.8 850.6,567.0 850.8,562.0 851.0,567.0 851.1,568.1 851.3,562.6 851.5,566.4 851.6,562.8 851.8,561.4 852.0,561.9 852.1,560.1 852.3,562.1 852.5,560.4 852.6,564.3 852.8,564.7 852.9,560.6 853.1,561.7 853.3,560.2 853.4,557.2 853.6,555.2 853.8,559.1 853.9,555.5 854.1,561.7 854.3,560.5 854.4,553.4 854.6,553.4 854.8,553.5 854.9,557.1 855.1,552.3 855.3,554.0 855.4,555.7 855.6,555.5 855.7,554.4 855.9,551.1 856.1,552.5 856.2,548.4 856.4,548.4 856.6,545.5 856.7,546.3 856.9,544.0 857.1,542.1 857.2,541.8 857.4,539.1 857.6,533.6 857.7,529.6 857.9,525.3 858.1,520.7 858.2,515.0 858.4,511.0 858.5,504.5 858.7,498.8 858.9,492.6 859.0,485.8 859.2,479.5 859.4,474.6 859.5,468.8 859.7,460.1 859.9,452.8 860.0,444.9 860.2,435.0 860.4,433.1 860.5,431.5 860.7,431.3 860.9,429.6 861.0,433.8 861.2,432.4 861.4,430.2 861.5,432.5 861.7,435.4 861.8,436.0 862.0,430.4 862.2,431.2 862.3,434.3 862.5,431.0 862.7,431.7 862.8,431.4 863.0,437.2 863.2,433.3 863.3,430.9 863.5,431.3 863.7,431.0 863.8,437.5 864.0,432.4 864.2,431.7 864.3,427.7 864.5,434.6 864.6,433.3 864.8,432.6 865.0,431.0 865.1,433.6 865.3,430.4 865.5,434.3 865.6,432.2 865.8,433.7 866.0,432.4 866.1,434.1 866.3,435.8 866.5,430.5 866.6,432.1 866.8,433.8 867.0,432.3 867.1,430.8 867.3,434.6 867.5,432.9 867.6,431.6 867.8,431.7 867.9,433.4 868.1,436.9 868.3,430.3 868.4,432.1 868.6,432.7 868.8,433.2 868.9,432.2 869.1,433.5 869.3,434.7 869.4,434.2 869.6,433.9 869.8,433.9 869.9,435.0 870.1,431.4 870.3,435.3 870.4,431.4 870.6,434.7 870.7,432.0 870.9,430.0 871.1,432.3 871.2,434.1 871.4,432.6 871.6,432.4 871.7,436.1 871.9,433.9 872.1,432.4 872.2,433.6 872.4,432.5 872.6,431.3 872.7,431.2 872.9,430.9 873.1,431.5 873.2,433.3 873.4,432.7 873.6,433.2 873.7,433.3 873.9,433.1 874.0,436.1 874.2,433.4 874.4,432.7 874.5,434.6 874.7,432.7 874.9,431.7 875.0,433.0 875.2,428.6 875.4,437.8 875.5,433.1 875.7,436.3 875.9,430.8 876.0,427.5 876.2,437.6 876.4,432.4 876.5,431.7 876.7,433.3 876.8,431.6 877.0,437.1 877.2,431.0 877.3,432.0 877.5,432.7 877.7,433.9 877.8,431.4 878.0,433.7 878.2,432.3 878.3,433.7 878.5,437.1 878.7,432.8 878.8,432.3 879.0,431.2 879.2,434.4 879.3,432.8 879.5,431.5 879.6,432.4 879.8,430.3 880.0,428.8 880.1,434.5 880.3,436.5 880.5,431.0 880.6,429.7 880.8,430.9 881.0,431.1 881.1,433.9 881.3,434.1 881.5,431.0 881.6,434.5 881.8,436.3 882.0,434.7 882.1,427.8 882.3,428.9 882.5,434.1 882.6,434.1 882.8,432.2 882.9,434.2 883.1,430.1 883.3,432.9 883.4,434.8 883.6,430.1 883.8,433.8 883.9,432.3 884.1,432.7 884.3,433.3 884.4,432.1 884.6,434.1 884.8,436.3 884.9,437.1 885.1,435.2 885.3,434.2 885.4,432.7 885.6,432.6 885.7,431.6 885.9,432.5 886.1,434.3 886.2,434.1 886.4,436.9 886.6,433.0 886.7,431.7 886.9,431.7 887.1,432.9 887.2,433.0 887.4,430.9 887.6,432.7 887.7,431.2 887.9,431.6 888.1,432.3 888.2,430.1 888.4,433.8 888.6,433.4 888.7,434.3 888.9,434.3 889.0,429.6 889.2,429.2 889.4,432.7 889.5,431.6 889.7,430.4 889.9,431.1 890.0,430.3 890.2,435.2 890.4,434.0 890.5,431.8 890.7,429.9 890.9,432.5 891.0,434.4 891.2,433.4 891.4,434.0 891.5,434.4 891.7,429.7 891.8,433.9 892.0,432.7 892.2,428.4 892.3,430.4 892.5,432.0 892.7,433.9 892.8,431.9 893.0,429.5 893.2,431.5 893.3,430.2 893.5,432.5 893.7,431.7 893.8,433.1 894.0,431.9 894.2,430.1 894.3,435.5 894.5,432.8 894.6,432.2 894.8,433.8 895.0,433.3 895.1,431.2 895.3,428.8 895.5,431.5 895.6,432.1 895.8,435.8 896.0,428.9 896.1,432.5 896.3,432.8 896.5,434.9 896.6,432.8 896.8,434.9 897.0,432.6 897.1,431.8 897.3,432.6 897.5,432.2 897.6,434.4 897.8,429.9 897.9,434.0 898.1,436.3 898.3,433.1 898.4,434.2 898.6,434.7 898.8,433.4 898.9,432.1 899.1,435.0 899.3,433.0 899.4,429.9 899.6,431.4 899.8,433.0 899.9,432.4 900.1,432.9 900.3,432.8 900.4,431.3 900.6,432.9 900.7,437.4 900.9,432.7 901.1,434.5 901.2,431.4 901.4,433.9 901.6,432.4 901.7,428.4 901.9,434.8 902.1,434.9 902.2,435.5 902.4,437.4 902.6,436.4 902.7,432.0 902.9,434.0 903.1,436.4 903.2,435.6 903.4,431.5 903.6,434.2 903.7,433.4 903.9,432.0 904.0,430.0 904.2,428.9 904.4,430.7 904.5,432.4 904.7,432.3 904.9,429.2 905.0,429.9 905.2,433.3 905.4,431.8 905.5,432.1 905.7,432.6 905.9,433.7 906.0,435.3 906.2,433.8 906.4,435.7 906.5,430.3 906.7,431.6 906.8,435.1 907.0,430.0 907.2,430.9 907.3,436.5 907.5,429.1 907.7,431.1 907.8,428.6 908.0,435.1 908.2,431.7 908.3,431.9 908.5,432.3 908.7,432.4 908.8,430.6 909.0,435.6 909.2,435.1 909.3,435.4 909.5,433.8 909.6,433.9 909.8,432.0 910.0,432.2 910.1,432.6 910.3,434.0 910.5,433.6 910.6,430.8 910.8,431.2 911.0,432.5 911.1,433.3 911.3,429.6 911.5,433.9 911.6,431.4 911.8,430.4 912.0,433.2 912.1,431.1 912.3,434.9 912.5,430.7 912.6,432.3 912.8,435.8 912.9,431.4 913.1,434.5 913.3,430.2 913.4,434.0 913.6,433.0 913.8,432.1 913.9,433.4 914.1,432.2 914.3,433.8 914.4,431.4 914.6,432.7 914.8,432.3 914.9,438.1 915.1,430.4 915.3,432.6 915.4,436.2 915.6,432.5 915.7,431.8 915.9,430.6 916.1,434.8 916.2,429.7 916.4,433.0 916.6,428.0 916.7,433.0 916.9,431.4 917.1,433.4 917.2,434.9 917.4,430.5 917.6,430.9 917.7,429.7 917.9,431.0 918.1,433.8 918.2,436.0 918.4,434.0 918.6,434.0 918.7,434.3 918.9,431.6 919.0,432.1 919.2,433.2 919.4,432.4 919.5,433.0 919.7,432.3 919.9,431.2 920.0,430.8 920.2,434.1 920.4,435.7 920.5,429.9 920.7,432.5 920.9,430.5 921.0,435.9 921.2,433.4 921.4,432.6 921.5,435.5 921.7,433.7 921.8,431.3 922.0,430.6 922.2,429.6 922.3,434.4 922.5,435.5 922.7,431.7 922.8,430.8 923.0,432.3 923.2,435.3 923.3,431.2 923.5,431.1 923.7,431.6 923.8,433.7 924.0,432.1 924.2,431.1 924.3,433.8 924.5,436.3 924.7,432.1 924.8,431.8 925.0,432.7 925.1,430.9 925.3,433.9 925.5,432.9 925.6,433.3 925.8,431.6 926.0,429.6 926.1,433.2 926.3,428.7 926.5,429.7 926.6,431.1 926.8,431.5 927.0,429.2 927.1,433.1 927.3,432.9 927.5,434.8 927.6,431.8 927.8,430.1 927.9,431.7 928.1,431.9 928.3,433.1 928.4,432.4 928.6,435.5 928.8,430.6 928.9,433.5 929.1,434.9 929.3,434.2 929.4,434.3 929.6,431.0 929.8,430.6 929.9,435.4 930.1,430.9 930.3,431.0 930.4,433.8 930.6,435.6 930.7,434.2 930.9,433.9 931.1,432.0 931.2,433.4 931.4,436.7 931.6,432.2 931.7,435.7 931.9,430.9 932.1,435.1 932.2,434.1 932.4,434.4 932.6,433.8 932.7,430.1 932.9,431.0 933.1,431.5 933.2,432.1 933.4,435.8 933.6,433.7 933.7,433.8 933.9,434.6 934.0,431.7 934.2,434.2 934.4,434.1 934.5,434.8 934.7,436.8 934.9,431.5 935.0,430.1 935.2,432.4 935.4,434.6 935.5,438.0 935.7,432.4 935.9,430.3 936.0,432.1 936.2,430.9 936.4,429.8 936.5,430.5 936.7,433.6 936.8,430.6 937.0,431.2 937.2,435.7 937.3,433.5 937.5,435.5 937.7,432.9 937.8,431.6 938.0,434.8 938.2,436.8 938.3,430.1 938.5,432.0 938.7,429.8 938.8,435.3 939.0,430.6 939.2,428.6 939.3,428.7 939.5,433.1 939.7,432.2 939.8,433.0 940.0,430.7 940.1,430.7 940.3,432.5 940.5,435.4 940.6,431.2 940.8,433.6 941.0,431.5 941.1,432.2 941.3,429.5 941.5,430.5 941.6,433.6 941.8,432.0 942.0,429.2 942.1,433.8 942.3,431.8 942.5,430.4 942.6,430.2 942.8,431.7 942.9,435.3 943.1,435.2 943.3,432.2 943.4,431.9 943.6,427.7 943.8,434.4 943.9,430.5 944.1,431.2 944.3,436.0 944.4,434.3 944.6,432.4 944.8,433.7 944.9,433.0 945.1,431.8 945.3,434.3 945.4,431.8 945.6,434.0 945.7,433.8 945.9,431.6 946.1,433.8 946.2,432.1 946.4,429.6 946.6,432.6 946.7,433.0 946.9,431.3 947.1,433.4 947.2,430.6 947.4,435.2 947.6,431.5 947.7,433.7 947.9,434.3 948.1,429.2 948.2,434.4 948.4,429.2 948.6,431.4 948.7,429.8 948.9,434.6 949.0,430.3 949.2,429.8 949.4,432.9 949.5,433.0 949.7,427.9 949.9,432.4 950.0,433.5 950.2,433.9 950.4,431.8 950.5,432.0 950.7,432.4 950.9,429.3 951.0,433.3 951.2,431.8 951.4,429.8 951.5,434.7 951.7,430.7 951.8,429.1 952.0,435.4 952.2,434.9 952.3,434.7 952.5,436.3 952.7,431.8 952.8,436.4 953.0,431.7 953.2,429.8 953.3,435.9 953.5,433.3 953.7,436.5 953.8,431.2 954.0,434.2 954.2,433.2 954.3,432.6 954.5,431.6 954.7,433.4 954.8,432.7 955.0,433.8 955.1,432.5 955.3,435.0 955.5,432.6 955.6,436.5 955.8,433.7 956.0,428.9 956.1,432.5 956.3,435.2 956.5,432.2 956.6,434.6 956.8,436.0 957.0,434.2 957.1,431.2 957.3,431.9 957.5,432.9 957.6,434.5 957.8,434.8 957.9,430.0 958.1,432.2 958.3,434.6 958.4,436.9 958.6,435.4 958.8,427.8 958.9,435.0 959.1,432.9 959.3,432.3 959.4,433.0 959.6,433.2 959.8,435.4 959.9,434.8 960.1,429.4 960.3,434.2 960.4,431.0 960.6,436.0 960.7,433.2 960.9,432.2 961.1,430.7 961.2,434.9 961.4,431.5 961.6,431.9 961.7,434.2 961.9,431.8 962.1,434.5 962.2,434.3 962.4,432.7 962.6,438.0 962.7,432.9 962.9,434.7 963.1,435.6 963.2,433.5 963.4,431.2 963.6,433.5 963.7,430.2 963.9,435.0 964.0,435.3 964.2,429.6 964.4,431.9 964.5,430.8 964.7,434.3 964.9,431.1 965.0,432.2 965.2,431.4 965.4,432.7 965.5,430.3 965.7,434.0 965.9,434.6 966.0,435.6 966.2,430.4 966.4,434.2 966.5,434.8 966.7,434.6 966.8,433.6 967.0,435.2 967.2,433.3 967.3,433.9 967.5,433.8 967.7,434.6 967.8,432.6 968.0,433.6 968.2,432.5 968.3,432.2 968.5,432.0 968.7,437.0 968.8,433.8 969.0,434.3 969.2,431.2 969.3,435.8 969.5,434.1 969.7,433.3 969.8,433.4 970.0,430.7 970.1,433.6 970.3,430.8 970.5,435.6 970.6,436.3 970.8,430.3 971.0,431.8 971.1,431.7 971.3,432.5 971.5,431.7 971.6,435.1 971.8,430.8 972.0,433.7 972.1,430.8 972.3,432.5 972.5,436.6 972.6,435.2 972.8,430.5 972.9,433.0 973.1,433.5 973.3,432.2 973.4,433.5 973.6,433.8 973.8,432.5 973.9,432.4 974.1,429.7 974.3,432.6 974.4,429.0 974.6,429.1 974.8,429.3 974.9,430.6 975.1,432.4 975.3,432.4 975.4,433.0 975.6,434.1 975.8,432.8 975.9,434.0 976.1,429.5 976.2,431.6 976.4,433.6 976.6,436.5 976.7,432.8 976.9,433.5 977.1,434.8 977.2,434.9 977.4,437.1 977.6,431.6 977.7,432.8 977.9,427.6 978.1,432.8 978.2,433.0 978.4,429.9 978.6,432.4 978.7,432.4 978.9,433.4 979.0,433.9 979.2,429.7 979.4,430.7 979.5,429.3 979.7,433.4 979.9,432.6 980.0,434.4 980.2,430.8 980.4,435.4 980.5,431.6 980.7,430.5 980.9,429.9 981.0,434.6 981.2,430.6 981.4,434.1 981.5,434.2 981.7,435.3 981.8,430.4 982.0,429.5 982.2,433.9 982.3,434.2 982.5,433.4 982.7,427.8 982.8,430.7 983.0,433.8 983.2,436.2 983.3,434.0 983.5,430.4 983.7,429.0 983.8,433.2 984.0,434.1 984.2,433.7 984.3,436.4 984.5,430.9 984.7,434.8 984.8,430.6 985.0,436.1 985.1,435.2 985.3,432.1 985.5,434.2 985.6,431.2 985.8,432.7 986.0,435.0 986.1,431.5 986.3,431.0 986.5,436.5 986.6,429.1 986.8,431.7 987.0,431.2 987.1,436.4 987.3,434.1 987.5,433.4 987.6,430.6 987.8,435.6 987.9,434.4 988.1,436.7 988.3,433.2 988.4,432.0 988.6,436.0 988.8,433.9 988.9,431.7 989.1,429.6 989.3,431.4 989.4,433.3 989.6,435.0 989.8,434.5 989.9,434.0 990.1,432.4 990.3,432.8 990.4,429.4 990.6,432.1 990.8,434.8 990.9,429.7 991.1,430.8 991.2,432.5 991.4,434.1 991.6,436.4 991.7,434.7 991.9,430.9 992.1,434.3 992.2,435.3 992.4,432.3 992.6,432.2 992.7,431.5 992.9,431.4 993.1,429.9 993.2,434.4 993.4,430.8 993.6,434.6 993.7,431.3 993.9,432.3 994.0,432.2 994.2,430.8 994.4,432.7 994.5,430.5 994.7,431.0 994.9,432.4 995.0,433.8 995.2,434.2 995.4,433.7 995.5,433.1 995.7,432.7 995.9,426.8 996.0,431.4 996.2,431.2 996.4,434.4 996.5,434.1 996.7,433.3 996.8,432.3 997.0,434.7 997.2,429.5 997.3,433.8 997.5,430.6 997.7,437.3 997.8,432.7 998.0,432.2 998.2,432.3 998.3,431.5 998.5,432.1 998.7,432.4 998.8,436.4 999.0,434.1 999.2,437.3 999.3,431.5 999.5,432.1 999.7,433.1 999.8,434.3 1000.0,433.8 1000.1,429.1 1000.3,429.3 1000.5,432.8 1000.6,430.2 1000.8,435.8 1001.0,436.5 1001.1,433.7 1001.3,434.4 1001.5,433.8 1001.6,432.3 1001.8,426.7 1002.0,434.0 1002.1,432.6 1002.3,432.2 1002.5,432.8 1002.6,430.9 1002.8,429.2 1002.9,435.2 1003.1,432.4 1003.3,433.2 1003.4,432.0 1003.6,435.7 1003.8,436.2 1003.9,437.3 1004.1,431.7 1004.3,432.3 1004.4,432.6 1004.6,437.4 1004.8,433.4 1004.9,434.2 1005.1,435.5 1005.3,434.5 1005.4,431.3 1005.6,431.6 1005.8,432.7 1005.9,431.7 1006.1,433.9 1006.2,432.6 1006.4,432.6 1006.6,431.6 1006.7,432.8 1006.9,433.0 1007.1,433.0 1007.2,434.0 1007.4,428.3 1007.6,431.7 1007.7,431.9 1007.9,428.2 1008.1,429.9 1008.2,435.8 1008.4,431.3 1008.6,431.1 1008.7,429.0 1008.9,430.1 1009.0,431.2 1009.2,435.0 1009.4,434.4 1009.5,432.2 1009.7,431.7 1009.9,434.7 1010.0,433.5 1010.2,433.5 1010.4,432.6 1010.5,432.0 1010.7,433.3 1010.9,435.1 1011.0,430.3 1011.2,429.6 1011.4,432.9 1011.5,430.7 1011.7,431.8 1011.9,431.4 1012.0,431.8 1012.2,434.2 1012.3,431.6 1012.5,430.7 1012.7,434.5 1012.8,428.8 1013.0,428.6 1013.2,429.1 1013.3,428.8 1013.5,431.2 1013.7,433.4 1013.8,433.9 1014.0,434.3 1014.2,432.5 1014.3,432.8 1014.5,431.4 1014.7,436.7 1014.8,428.1 1015.0,428.2 1015.1,432.8 1015.3,431.4 1015.5,431.8 1015.6,432.2 1015.8,433.1 1016.0,432.9 1016.1,434.3 1016.3,432.4 1016.5,432.7 1016.6,432.1 1016.8,434.4 1017.0,432.6 1017.1,432.6 1017.3,431.5 1017.5,434.8 1017.6,431.9 1017.8,430.8 1017.9,431.5 1018.1,433.4 1018.3,433.7 1018.4,433.2 1018.6,431.3 1018.8,429.6 1018.9,433.0 1019.1,434.0 1019.3,432.0 1019.4,432.3 1019.6,434.5 1019.8,434.2 1019.9,432.9 1020.1,431.4 1020.3,435.1 1020.4,434.7 1020.6,431.7 1020.8,435.1 1020.9,432.5 1021.1,432.0 1021.2,432.9 1021.4,434.7 1021.6,432.8 1021.7,433.4 1021.9,432.0 1022.1,434.4 1022.2,430.6 1022.4,436.0 1022.6,433.0 1022.7,432.7 1022.9,430.8 1023.1,433.9 1023.2,431.6 1023.4,433.8 1023.6,431.2 1023.7,429.3 1023.9,433.5 1024.0,431.8 1024.2,434.5 1024.4,430.8 1024.5,430.3 1024.7,432.6 1024.9,434.9 1025.0,431.9 1025.2,430.4 1025.4,430.6 1025.5,431.1 1025.7,436.3 1025.9,434.0 1026.0,429.9 1026.2,435.1 1026.4,430.5 1026.5,429.0 1026.7,431.2 1026.9,430.5 1027.0,433.4 1027.2,435.1 1027.3,432.9 1027.5,433.1 1027.7,432.8 1027.8,431.3 1028.0,433.0 1028.2,432.3 1028.3,431.9 1028.5,432.7 1028.7,429.1 1028.8,431.8 1029.0,432.5 1029.2,433.1 1029.3,433.9 1029.5,430.1 1029.7,432.4 1029.8,434.8 1030.0,433.8 1030.1,433.0 1030.3,433.6 1030.5,430.6 1030.6,435.0 1030.8,431.7 1031.0,432.4 1031.1,435.0 1031.3,432.6 1031.5,432.9 1031.6,431.7 1031.8,433.6 1032.0,432.1 1032.1,436.0 1032.3,434.8 1032.5,431.2 1032.6,430.6 1032.8,432.7 1032.9,433.9 1033.1,430.6 1033.3,436.8 1033.4,434.3 1033.6,431.4 1033.8,431.4 1033.9,434.7 1034.1,436.4 1034.3,429.8 1034.4,432.4 1034.6,434.5 1034.8,432.6 1034.9,430.9 1035.1,437.8 1035.3,430.5 1035.4,431.2 1035.6,436.8 1035.8,431.2 1035.9,436.2 1036.1,430.5 1036.2,431.9 1036.4,428.3 1036.6,433.9 1036.7,432.7 1036.9,430.6 1037.1,434.0 1037.2,434.1 1037.4,433.4 1037.6,432.8 1037.7,434.8 1037.9,431.7 1038.1,431.6 1038.2,432.6 1038.4,429.4 1038.6,433.3 1038.7,430.1 1038.9,433.8 1039.0,431.2 1039.2,436.5 1039.4,432.3 1039.5,433.0 1039.7,433.7 1039.9,433.9 1040.0,433.4 1040.2,434.1 1040.4,437.0 1040.5,433.9 1040.7,433.8 1040.9,433.7 1041.0,434.8 1041.2,433.0 1041.4,431.2 1041.5,433.2 1041.7,433.7 1041.9,430.0 1042.0,430.8 1042.2,430.9 1042.3,430.4 1042.5,433.3 1042.7,433.0 1042.8,430.5 1043.0,433.8 1043.2,432.9 1043.3,432.0 1043.5,432.0 1043.7,433.2 1043.8,430.8 1044.0,433.1 1044.2,431.3 1044.3,430.6 1044.5,431.4 1044.7,431.3 1044.8,435.0 1045.0,435.3 1045.1,433.9 1045.3,431.8 1045.5,429.7 1045.6,435.1 1045.8,432.1 1046.0,434.4 1046.1,434.1 1046.3,433.2 1046.5,431.3 1046.6,432.3 1046.8,430.4 1047.0,434.6 1047.1,430.9 1047.3,430.9 1047.5,432.6 1047.6,431.8 1047.8,433.8 1047.9,434.8 1048.1,433.5 1048.3,434.0 1048.4,427.0 1048.6,433.7 1048.8,429.5 1048.9,432.3 1049.1,432.1 1049.3,431.2 1049.4,434.2 1049.6,430.9 1049.8,432.0 1049.9,435.7 1050.1,431.5 1050.3,431.6 1050.4,431.8 1050.6,429.6 1050.8,433.5 1050.9,431.7 1051.1,431.2 1051.2,434.5 1051.4,430.3 1051.6,435.6 1051.7,435.3 1051.9,431.7 1052.1,434.8 1052.2,432.9 1052.4,435.9 1052.6,432.6 1052.7,434.9 1052.9,432.0 1053.1,435.7 1053.2,431.8 1053.4,433.2 1053.6,432.6 1053.7,432.8 1053.9,432.4 1054.0,435.3 1054.2,437.8 1054.4,432.6 1054.5,434.5 1054.7,433.6 1054.9,431.9 1055.0,436.6 1055.2,434.2 1055.4,433.9 1055.5,434.8 1055.7,432.1 1055.9,433.0 1056.0,434.3 1056.2,434.6 1056.4,431.1 1056.5,434.0 1056.7,431.5 1056.9,431.8 1057.0,436.4 1057.2,434.8 1057.3,432.7 1057.5,432.0 1057.7,431.2 1057.8,431.1 1058.0,430.7 1058.2,433.4 1058.3,433.1 1058.5,431.2 1058.7,433.5 1058.8,430.6 1059.0,435.8 1059.2,431.4 1059.3,433.0 1059.5,436.6 1059.7,430.8 1059.8,432.1 1060.0,432.7 1060.1,434.8 1060.3,433.6 1060.5,429.7 1060.6,434.3 1060.8,439.4 1061.0,434.4 1061.1,435.1 1061.3,433.0 1061.5,433.5 1061.6,434.5 1061.8,434.4 1062.0,430.6 1062.1,435.5 1062.3,428.8 1062.5,433.8 1062.6,434.9 1062.8,431.1 1063.0,431.6 1063.1,434.8 1063.3,431.2 1063.4,436.3 1063.6,434.5 1063.8,430.5 1063.9,433.2 1064.1,435.3 1064.3,431.7 1064.4,430.9 1064.6,432.7 1064.8,436.3 1064.9,433.4 1065.1,431.9 1065.3,431.2 1065.4,429.1 1065.6,433.2 1065.8,433.7 1065.9,432.8 1066.1,430.3 1066.2,434.6 1066.4,430.1 1066.6,438.1 1066.7,431.1 1066.9,434.0 1067.1,431.8 1067.2,431.3 1067.4,435.0 1067.6,432.9 1067.7,432.2 1067.9,431.5 1068.1,434.5 1068.2,434.7 1068.4,436.5 1068.6,427.7 1068.7,433.1 1068.9,433.1 1069.0,435.6 1069.2,430.9 1069.4,433.8 1069.5,429.9 1069.7,431.0 1069.9,432.7 1070.0,431.3 1070.2,434.9 1070.4,433.3 1070.5,433.8 1070.7,435.2 1070.9,432.7 1071.0,433.0 1071.2,429.9 1071.4,439.3 1071.5,434.0 1071.7,434.5 1071.9,433.6 1072.0,431.9 1072.2,431.9 1072.3,432.6 1072.5,433.6 1072.7,431.7 1072.8,432.0 1073.0,436.3 1073.2,433.2 1073.3,435.4 1073.5,435.0 1073.7,432.4 1073.8,432.6 1074.0,432.5 1074.2,434.4 1074.3,433.1 1074.5,434.5 1074.7,431.9 1074.8,431.3 1075.0,429.2 1075.1,430.2 1075.3,434.3 1075.5,433.6 1075.6,434.5 1075.8,432.1 1076.0,428.8 1076.1,431.3 1076.3,437.0 1076.5,435.2 1076.6,435.2 1076.8,431.7 1077.0,432.7 1077.1,432.1 1077.3,429.2 1077.5,434.3 1077.6,434.4 1077.8,428.8 1078.0,432.0 1078.1,434.2 1078.3,436.7 1078.4,435.7 1078.6,437.5 1078.8,432.6 1078.9,432.6 1079.1,430.7 1079.3,433.0 1079.4,434.1 1079.6,434.2 1079.8,429.0 1079.9,436.2 1080.1,432.4 1080.3,432.7 1080.4,431.5 1080.6,433.5 1080.8,431.7 1080.9,431.1 1081.1,433.0 1081.2,433.6 1081.4,433.1 1081.6,434.6 1081.7,433.1 1081.9,433.3 1082.1,432.3 1082.2,430.1 1082.4,430.1 1082.6,433.6 1082.7,431.5 1082.9,432.1 1083.1,431.2 1083.2,432.7 1083.4,432.2 1083.6,433.6 1083.7,434.2 1083.9,431.0 1084.0,430.1 1084.2,431.4 1084.4,431.8 1084.5,432.2 1084.7,433.6 1084.9,436.2 1085.0,431.4 1085.2,432.3 1085.4,433.8 1085.5,434.6 1085.7,430.2 1085.9,436.3 1086.0,429.2 1086.2,431.4 1086.4,428.0 1086.5,434.1 1086.7,432.7 1086.9,433.7 1087.0,432.4 1087.2,433.1 1087.3,434.2 1087.5,430.6 1087.7,434.2 1087.8,433.7 1088.0,431.6 1088.2,433.8 1088.3,433.6 1088.5,432.0 1088.7,433.4 1088.8,435.2 1089.0,432.9 1089.2,433.1 1089.3,429.3 1089.5,434.9 1089.7,430.8 1089.8,434.2 1090.0,433.4 1090.1,433.3 1090.3,432.2 1090.5,431.0 1090.6,429.3 1090.8,434.0 1091.0,430.1 1091.1,430.7 1091.3,431.1 1091.5,434.2 1091.6,430.9 1091.8,432.9 1092.0,432.0 1092.1,433.2 1092.3,431.4 1092.5,430.5 1092.6,430.5 1092.8,433.1 1093.0,430.7 1093.1,429.8 1093.3,434.5 1093.4,429.8 1093.6,435.3 1093.8,431.6 1093.9,431.5 1094.1,429.8 1094.3,432.2 1094.4,433.6 1094.6,434.3 1094.8,435.2 1094.9,431.2 1095.1,433.2 1095.3,434.1 1095.4,431.7 1095.6,434.2 1095.8,433.6 1095.9,433.6 1096.1,429.4 1096.2,429.8 1096.4,433.0 1096.6,435.8 1096.7,432.2 1096.9,432.6 1097.1,432.0 1097.2,431.6 1097.4,433.3 1097.6,430.9 1097.7,431.1 1097.9,432.3 1098.1,433.5 1098.2,433.6 1098.4,431.3 1098.6,434.9 1098.7,433.0 1098.9,434.2 1099.0,435.4 1099.2,431.5 1099.4,432.8 1099.5,432.6 1099.7,431.0 1099.9,435.6 1100.0,432.8 1100.2,432.1 1100.4,431.1 1100.5,434.8 1100.7,431.3 1100.9,432.3 1101.0,430.0 1101.2,430.5 1101.4,431.6 1101.5,428.5 1101.7,432.7 1101.9,433.5 1102.0,433.4 1102.2,434.6 1102.3,432.8 1102.5,436.4 1102.7,432.9 1102.8,431.9 1103.0,430.7 1103.2,433.4 1103.3,430.0 1103.5,434.0 1103.7,433.0 1103.8,436.4 1104.0,434.2 1104.2,434.3 1104.3,429.8 1104.5,431.7 1104.7,434.8 1104.8,431.7 1105.0,431.8 1105.1,433.2 1105.3,432.7 1105.5,433.3 1105.6,433.7 1105.8,436.1 1106.0,432.9 1106.1,430.2 1106.3,429.9 1106.5,433.2 1106.6,434.1 1106.8,433.1 1107.0,431.0 1107.1,432.0 1107.3,433.8 1107.5,432.0 1107.6,433.1 1107.8,431.7 1108.0,433.5 1108.1,435.5 1108.3,432.6 1108.4,431.2 1108.6,434.8 1108.8,432.9 1108.9,431.0 1109.1,433.4 1109.3,434.0 1109.4,428.8 1109.6,431.1 1109.8,430.7 1109.9,434.5 1110.1,429.6 1110.3,435.9 1110.4,433.7 1110.6,431.3 1110.8,430.1 1110.9,434.5 1111.1,434.0 1111.2,432.3 1111.4,436.4 1111.6,431.5 1111.7,430.5 1111.9,431.7 1112.1,432.8 1112.2,433.3 1112.4,436.2 1112.6,443.6 1112.7,452.3 1112.9,461.2 1113.1,468.6 1113.2,474.4 1113.4,480.6 1113.6,487.0 1113.7,493.3 1113.9,499.4 1114.1,503.7 1114.2,510.2 1114.4,516.5 1114.5,519.9 1114.7,524.0 1114.9,529.3 1115.0,534.7 1115.2,538.5 1115.4,541.1 1115.5,542.9 1115.7,543.6 1115.9,543.9 1116.0,546.0 1116.2,547.2 1116.4,550.1 1116.5,552.5 1116.7,550.3 1116.9,554.7 1117.0,551.8 1117.2,556.0 1117.3,552.6 1117.5,556.1 1117.7,553.4 1117.8,556.9 1118.0,557.4 1118.2,559.6 1118.3,556.9 1118.5,555.3 1118.7,554.9 1118.8,558.9 1119.0,562.3 1119.2,559.1 1119.3,558.7 1119.5,561.3 1119.7,566.0 1119.8,562.2 1120.0,559.6 1120.1,559.5 1120.3,560.3 1120.5,564.8 1120.6,563.2 1120.8,564.9 1121.0,562.4 1121.1,560.7 1121.3,566.1 1121.5,564.1 1121.6,567.5 1121.8,566.7 1122.0,561.5 1122.1,562.7 1122.3,562.1 1122.5,562.8 1122.6,565.1 1122.8,568.6 1123.0,563.3 1123.1,566.2 1123.3,569.1 1123.4,572.0 1123.6,566.8 1123.8,572.1 1123.9,570.0 1124.1,569.9 1124.3,568.9 1124.4,573.0 1124.6,566.7 1124.8,573.6 1124.9,572.6 1125.1,570.6 1125.3,571.1 1125.4,573.5 1125.6,574.6 1125.8,570.8 1125.9,572.7 1126.1,572.4 1126.2,571.6 1126.4,570.0 1126.6,568.2 1126.7,575.9 1126.9,573.6 1127.1,569.0 1127.2,570.7 1127.4,570.0 1127.6,575.6 1127.7,577.7 1127.9,576.2 1128.1,572.1 1128.2,570.7 1128.4,571.1 1128.6,570.8 1128.7,577.4 1128.9,576.1 1129.1,573.4 1129.2,578.3 1129.4,573.2 1129.5,572.9 1129.7,574.7 1129.9,575.3 1130.0,579.2 1130.2,574.6 1130.4,578.9 1130.5,573.5 1130.7,580.9 1130.9,579.9 1131.0,579.4 1131.2,578.6 1131.4,577.9 1131.5,573.8 1131.7,575.5 1131.9,572.1 1132.0,578.7 1132.2,577.4 1132.3,574.1 1132.5,580.4 1132.7,576.3 1132.8,578.1 1133.0,575.1 1133.2,574.9 1133.3,581.8 1133.5,580.7 1133.7,577.4 1133.8,581.4 1134.0,578.9 1134.2,579.7 1134.3,583.1 1134.5,580.9 1134.7,579.4 1134.8,583.1 1135.0,577.9 1135.1,581.4 1135.3,581.6 1135.5,579.4 1135.6,574.1 1135.8,579.3 1136.0,576.8 1136.1,579.0 1136.3,581.4 1136.5,577.8 1136.6,576.7 1136.8,582.2 1137.0,578.6 1137.1,579.6 1137.3,580.4 1137.5,584.7 1137.6,582.6 1137.8,581.3 1138.0,583.5 1138.1,582.7 1138.3,585.7 1138.4,582.0 1138.6,581.1 1138.8,585.6 1138.9,583.6 1139.1,580.1 1139.3,578.4 1139.4,578.7 1139.6,586.0 1139.8,581.8 1139.9,583.8 1140.1,583.3 1140.3,586.5 1140.4,579.5 1140.6,585.8 1140.8,586.0 1140.9,581.5 1141.1,584.1 1141.2,582.5 1141.4,582.1 1141.6,581.5 1141.7,582.4 1141.9,581.0 1142.1,585.0 1142.2,586.4 1142.4,580.6 1142.6,580.3 1142.7,585.4 1142.9,582.7 1143.1,582.5 1143.2,587.9 1143.4,588.0 1143.6,585.7 1143.7,583.5 1143.9,584.8 1144.1,580.8 1144.2,578.9 1144.4,583.6 1144.5,586.1 1144.7,587.6 1144.9,582.5 1145.0,582.2 1145.2,584.6 1145.4,584.5 1145.5,584.2 1145.7,583.0 1145.9,583.4 1146.0,582.9 1146.2,583.0 1146.4,585.7 1146.5,585.2 1146.7,589.7 1146.9,585.7 1147.0,583.3 1147.2,581.5 1147.3,583.5 1147.5,589.8 1147.7,589.6 1147.8,585.5 1148.0,582.2 1148.2,589.0 1148.3,584.1 1148.5,590.1 1148.7,583.9 1148.8,582.2 1149.0,585.2 1149.2,583.9 1149.3,588.0 1149.5,589.9 1149.7,590.3 1149.8,587.5 1150.0,590.5 1150.1,587.6 1150.3,583.1 1150.5,589.3 1150.6,589.0 1150.8,589.4 1151.0,584.9 1151.1,588.9 1151.3,589.7 1151.5,590.2 1151.6,584.2 1151.8,585.2 1152.0,589.2 1152.1,587.6 1152.3,590.4 1152.5,586.7 1152.6,586.9 1152.8,590.1 1153.0,588.8 1153.1,584.6 1153.3,584.6 1153.4,590.1 1153.6,591.1 1153.8,592.0 1153.9,590.8 1154.1,591.3 1154.3,586.4 1154.4,589.4 1154.6,586.2 1154.8,582.6 1154.9,590.4 1155.1,586.0 1155.3,588.2 1155.4,588.8 1155.6,592.4 1155.8,589.9 1155.9,591.6 1156.1,591.5 1156.2,591.2 1156.4,591.5 1156.6,588.5 1156.7,589.8 1156.9,585.0 1157.1,591.1 1157.2,585.4 1157.4,590.6 1157.6,591.5 1157.7,592.7 1157.9,589.6 1158.1,590.5 1158.2,587.3 1158.4,588.6 1158.6,587.4 1158.7,585.9 1158.9,589.9 1159.1,589.8 1159.2,590.1 1159.4,590.0 1159.5,583.5 1159.7,588.4 1159.9,591.4 1160.0,590.4 1160.2,592.0 1160.4,586.5 1160.5,584.8 1160.7,587.9 1160.9,588.3 1161.0,591.2 1161.2,593.9 1161.4,586.7 1161.5,588.9 1161.7,592.0 1161.9,587.7 1162.0,588.0 1162.2,589.6 1162.3,588.3 1162.5,588.8 1162.7,592.3 1162.8,592.0 1163.0,590.2 1163.2,589.8 1163.3,592.4 1163.5,586.4 1163.7,589.9 1163.8,587.5 1164.0,593.0 1164.2,590.5 1164.3,587.4 1164.5,586.0 1164.7,591.3 1164.8,587.6 1165.0,593.3 1165.2,593.8 1165.3,587.8 1165.5,590.9 1165.6,591.4 1165.8,588.9 1166.0,590.7 1166.1,588.4 1166.3,589.1 1166.5,590.5 1166.6,591.8 1166.8,592.1 1167.0,593.3 1167.1,594.5 1167.3,588.9 1167.5,592.3 1167.6,588.0 1167.8,589.7 1168.0,593.5 1168.1,588.5 1168.3,592.5 1168.4,591.5 1168.6,589.2 1168.8,591.9 1168.9,588.5 1169.1,592.1 1169.3,587.6 1169.4,587.2 1169.6,592.3 1169.8,593.2 1169.9,589.1 1170.1,591.1 1170.3,588.0 1170.4,595.4 1170.6,591.7 1170.8,588.6 1170.9,591.7 1171.1,592.0 1171.2,591.5 1171.4,590.1 1171.6,592.7 1171.7,590.1 1171.9,589.4 1172.1,594.9 1172.2,595.3 1172.4,595.1 1172.6,589.6 1172.7,595.5 1172.9,589.9 1173.1,595.5 1173.2,592.5 1173.4,587.5 1173.6,588.6 1173.7,593.2 1173.9,596.0 1174.1,593.7 1174.2,593.4 1174.4,588.8 1174.5,591.8 1174.7,595.7 1174.9,588.8 1175.0,588.9 1175.2,595.3 1175.4,591.6 1175.5,592.2 1175.7,591.2 1175.9,589.4 1176.0,588.4 1176.2,595.8 1176.4,591.7 1176.5,591.5 1176.7,594.0 1176.9,593.8 1177.0,589.5 1177.2,592.5 1177.3,592.6 1177.5,595.9 1177.7,590.5 1177.8,588.0 1178.0,591.3 1178.2,588.6 1178.3,589.6 1178.5,590.7 1178.7,593.9 1178.8,589.3 1179.0,588.7 1179.2,595.6 1179.3,589.8 1179.5,593.0 1179.7,594.3 1179.8,590.7 1180.0,596.1 1180.2,596.2 1180.3,594.1 1180.5,591.6 1180.6,591.8 1180.8,588.9 1181.0,589.5 1181.1,589.8 1181.3,593.6 1181.5,593.4 1181.6,594.8 1181.8,595.9 1182.0,590.5 1182.1,590.9 1182.3,589.7 1182.5,588.9 1182.6,588.8 1182.8,594.3 1183.0,590.4 1183.1,588.9 1183.3,592.7 1183.4,591.7 1183.6,596.1 1183.8,594.5 1183.9,589.7 1184.1,587.7 1184.3,591.8 1184.4,594.0 1184.6,590.9 1184.8,594.1 1184.9,594.8 1185.1,595.4 1185.3,595.0 1185.4,592.2 1185.6,592.3 1185.8,591.9 1185.9,596.7 1186.1,596.2 1186.2,595.9 1186.4,594.0 1186.6,591.4 1186.7,595.6 1186.9,594.3 1187.1,589.7 1187.2,595.8 1187.4,589.6 1187.6,592.9 1187.7,596.1 1187.9,595.8 1188.1,592.9 1188.2,595.5 1188.4,595.5 1188.6,595.2 1188.7,593.0 1188.9,597.1 1189.1,593.1" fill="none" stroke="#fafa1e" stroke-width="1.3" stroke-linejoin="round"/><rect x="783.55" y="402.7" width="405.50" height="215.10" fill="none" stroke="#bdbdbd" stroke-width="1"/><path d="M783.55 614.49h2M1189.05 614.49h-2M783.55 592.10h3.2M1189.05 592.10h-3.2M783.55 569.71h2M1189.05 569.71h-2M783.55 547.33h3.2M1189.05 547.33h-3.2M783.55 524.94h2M1189.05 524.94h-2M783.55 502.55h3.2M1189.05 502.55h-3.2M783.55 480.16h2M1189.05 480.16h-2M783.55 457.77h3.2M1189.05 457.77h-3.2M783.55 435.39h2M1189.05 435.39h-2M783.55 413.00h3.2M1189.05 413.00h-3.2M788.30 617.8v-2M788.30 402.7v2M854.30 617.8v-3.2M854.30 402.7v3.2M920.30 617.8v-2M920.30 402.7v2M986.30 617.8v-3.2M986.30 402.7v3.2M1052.30 617.8v-2M1052.30 402.7v2M1118.30 617.8v-3.2M1118.30 402.7v3.2M1184.30 617.8v-2M1184.30 402.7v2" stroke="#cfcfcf" stroke-width="0.9" fill="none"/><text transform="rotate(0.03 781 415.55)" x="781" y="415.55" font-size="8" text-anchor="end" fill="#d8d8d8">-30</text><text transform="rotate(0.03 781 460.32)" x="781" y="460.32" font-size="8" text-anchor="end" fill="#d8d8d8">-40</text><text transform="rotate(0.03 781 505.10)" x="781" y="505.10" font-size="8" text-anchor="end" fill="#d8d8d8">-50</text><text transform="rotate(0.03 781 549.88)" x="781" y="549.88" font-size="8" text-anchor="end" fill="#d8d8d8">-60</text><text transform="rotate(0.03 781 594.65)" x="781" y="594.65" font-size="8" text-anchor="end" fill="#d8d8d8">-70</text><text transform="rotate(0.03 854.30 627.3)" x="854.30" y="627.3" font-size="8.3" text-anchor="middle" fill="#d8d8d8">-20</text><text transform="rotate(0.03 986.30 627.3)" x="986.30" y="627.3" font-size="8.3" text-anchor="middle" fill="#d8d8d8">0</text><text transform="rotate(0.03 1118.30 627.3)" x="1118.30" y="627.3" font-size="8.3" text-anchor="middle" fill="#d8d8d8">20</text><text transform="rotate(0.03 986.3 637.3)" x="986.3" y="637.3" font-size="7.8" font-weight="bold" text-anchor="middle" fill="#e4e4e4">Frequency (MHz)</text><text transform="translate(763.2,510.6) rotate(-90.03)" font-size="7" font-weight="bold" text-anchor="middle" fill="#e4e4e4">dBm</text></svg>
<div class="a" style="left:751.2px;top:643.5px;width:448.8px;height:15.2px;background:#f0f0f0"></div>
<div class="a" style="left:751px;top:643px;width:449px;height:16px;overflow:hidden"><div class="t" style="top:5px;left:5px;--fx:0.2px;font-size:8.4px;color:#333">Processing</div><div class="t" style="top:5px;left:72px;--fx:0.2px;font-size:8.4px;color:#333;white-space:pre">VBW = 1.06103 kHz  RBW = 60.0000 kHz  Sample Rate = 10.0000 kHz  Updates = 891  T = 0.0148571</div></div>
<div class="a" style="left:1114px;top:664.8px;width:84.4px;height:3.8px;background:#1a86e2"></div>
</body></html>
